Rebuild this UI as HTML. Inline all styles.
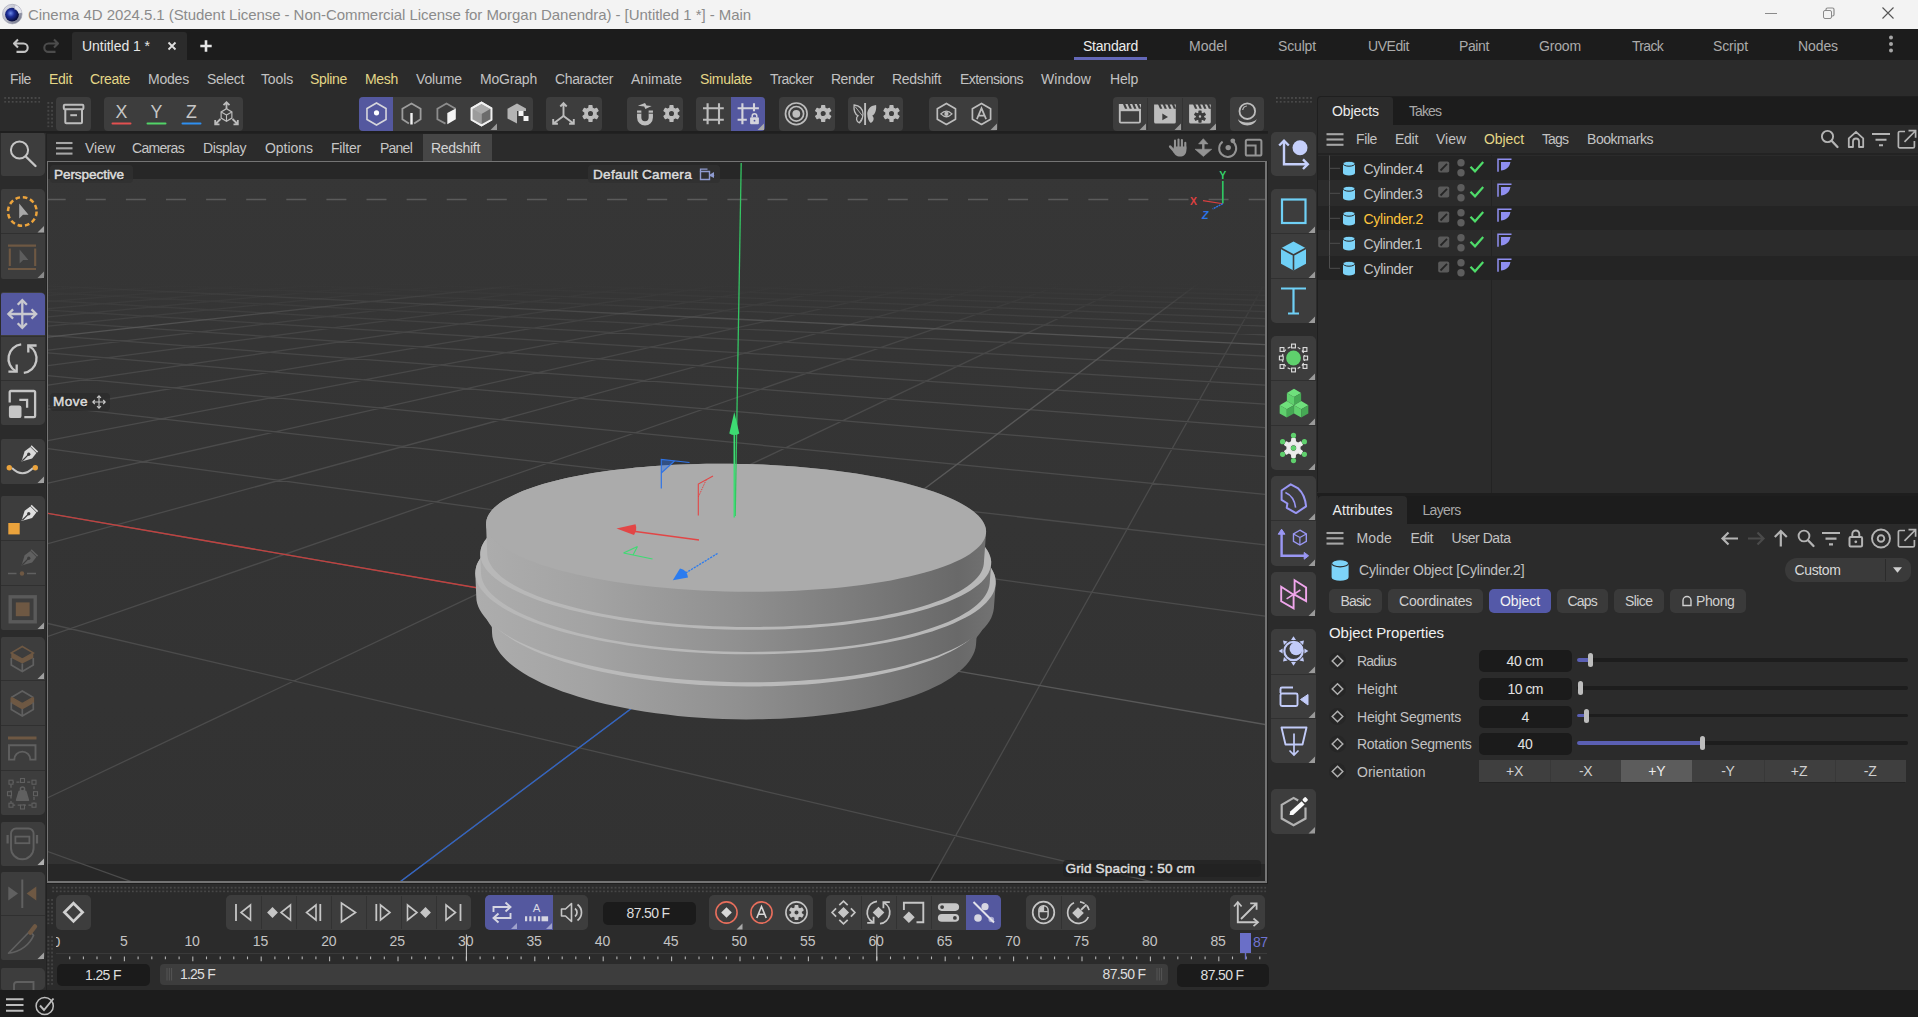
<!DOCTYPE html>
<html><head><meta charset="utf-8"><title>Cinema 4D</title><style>
html,body{margin:0;padding:0;background:#2b2b2b;}
body{width:1918px;height:1017px;position:relative;overflow:hidden;font-family:"Liberation Sans",sans-serif;}
.b{position:absolute;display:block;}
.t{position:absolute;white-space:pre;}
svg{overflow:visible}
</style></head><body>
<div class="b" style="left:0px;top:0px;width:1918px;height:29px;background:#f3f3f3;"></div>
<svg class="b" style="left:0px;top:0px;" width="30" height="30" viewBox="0 0 30 30">
<defs><radialGradient id="lg1" cx="0.4" cy="0.4" r="0.65"><stop offset="0" stop-color="#6c8ae8"/><stop offset="0.4" stop-color="#1d2e98"/><stop offset="1" stop-color="#04072c"/></radialGradient>
<linearGradient id="lg2" x1="0" y1="0" x2="1" y2="1"><stop offset="0" stop-color="#ececf2"/><stop offset="0.5" stop-color="#b4b6c4"/><stop offset="1" stop-color="#5e6278"/></linearGradient></defs>
<circle cx="12.3" cy="14.1" r="9.8" fill="url(#lg2)" stroke="#9a9cac" stroke-width="0.6"/>
<circle cx="12" cy="14.6" r="6.9" fill="url(#lg1)"/>
<path d="M15.5 5.2L14.2 9.2A6 6 0 0 1 18.5 13.5L21.9 12.4A9.8 9.8 0 0 0 15.5 5.2Z" fill="#f0f0f6" opacity="0.85"/>
</svg>
<div class="t" style="left:28px;top:4.5px;height:20px;line-height:20px;font-size:15px;color:#8b8b8b;letter-spacing:-0.054px;">Cinema 4D 2024.5.1 (Student License - Non-Commercial License for Morgan Danendra) - [Untitled 1 *] - Main</div>
<svg class="b" style="left:1760px;top:3.2px;" width="140" height="22" viewBox="0 0 140 22">
<path d="M5 10.5H17" stroke="#8a8a8a" stroke-width="1" fill="none"/>
<rect x="63.5" y="7.5" width="8" height="8" rx="1.5" stroke="#8a8a8a" fill="none"/>
<path d="M66 7.5V6.5a1.5 1.5 0 0 1 1.5-1.5h5a1.5 1.5 0 0 1 1.5 1.5v5a1.5 1.5 0 0 1-1.5 1.5h-1" stroke="#8a8a8a" stroke-width="1.2" fill="none"/>
<path d="M122.5 4.5L133.5 15.5M133.5 4.5L122.5 15.5" stroke="#555" stroke-width="1.1" fill="none"/>
</svg>
<div class="b" style="left:0px;top:29px;width:1918px;height:31px;background:#1c1c1c;"></div>
<div class="b" style="left:72px;top:32px;width:115px;height:28px;background:#2b2b2b;border-radius:3px 3px 0 0;"></div>
<svg class="b" style="left:10px;top:36px;" width="56" height="20" viewBox="0 0 56 20">
<path d="M8 3.5L4 7.5L8 11.5M4.5 7.5H13.5a4.2 4.2 0 0 1 0 8.4H6.5" stroke="#c4c4c4" stroke-width="2.1" fill="none" stroke-linejoin="round"/>
<path d="M44 3.5L48 7.5L44 11.5M47.5 7.5H38.5a4.2 4.2 0 0 0 0 8.4H45.5" stroke="#4c4c4c" stroke-width="2.1" fill="none" stroke-linejoin="round"/>
</svg>
<div class="t" style="left:82px;top:36.0px;height:20px;line-height:20px;font-size:14px;color:#e6e6e6;letter-spacing:-0.040px;">Untitled 1 *</div>
<svg class="b" style="left:166px;top:40px;" width="12" height="12" viewBox="0 0 12 12"><path d="M2.5 2.5L9.5 9.5M9.5 2.5L2.5 9.5" stroke="#e0e0e0" stroke-width="1.8" fill="none"/></svg>
<svg class="b" style="left:199px;top:39px;" width="14" height="14" viewBox="0 0 14 14"><path d="M7 1.3V12.7M1.3 7H12.7" stroke="#e6e6e6" stroke-width="2.6" fill="none"/></svg>
<div class="t" style="left:1083px;top:36.0px;height:20px;line-height:20px;font-size:14px;color:#ededed;letter-spacing:-0.229px;">Standard</div>
<div class="t" style="left:1189px;top:36.0px;height:20px;line-height:20px;font-size:14px;color:#ababab;letter-spacing:-0.028px;">Model</div>
<div class="t" style="left:1278px;top:36.0px;height:20px;line-height:20px;font-size:14px;color:#ababab;letter-spacing:-0.154px;">Sculpt</div>
<div class="t" style="left:1368px;top:36.0px;height:20px;line-height:20px;font-size:14px;color:#ababab;letter-spacing:-0.430px;">UVEdit</div>
<div class="t" style="left:1459px;top:36.0px;height:20px;line-height:20px;font-size:14px;color:#ababab;letter-spacing:-0.384px;">Paint</div>
<div class="t" style="left:1539px;top:36.0px;height:20px;line-height:20px;font-size:14px;color:#ababab;letter-spacing:-0.159px;">Groom</div>
<div class="t" style="left:1632px;top:36.0px;height:20px;line-height:20px;font-size:14px;color:#ababab;letter-spacing:-0.697px;">Track</div>
<div class="t" style="left:1713px;top:36.0px;height:20px;line-height:20px;font-size:14px;color:#ababab;letter-spacing:-0.133px;">Script</div>
<div class="t" style="left:1798px;top:36.0px;height:20px;line-height:20px;font-size:14px;color:#ababab;letter-spacing:-0.094px;">Nodes</div>
<div class="b" style="left:1074px;top:57px;width:73px;height:3px;background:#6468b8;"></div>
<svg class="b" style="left:1886px;top:34.2px;" width="10" height="22" viewBox="0 0 10 22"><circle cx="5" cy="3.5" r="2" fill="#a6a6a6"/><circle cx="5" cy="10" r="2" fill="#a6a6a6"/><circle cx="5" cy="16.5" r="2" fill="#a6a6a6"/></svg>
<div class="b" style="left:0px;top:60px;width:1918px;height:73px;background:#2b2b2b;"></div>
<div class="t" style="left:10px;top:69.0px;height:20px;line-height:20px;font-size:14px;color:#c2c2c2;letter-spacing:-0.391px;">File</div>
<div class="t" style="left:49px;top:69.0px;height:20px;line-height:20px;font-size:14px;color:#e4d787;letter-spacing:-0.281px;">Edit</div>
<div class="t" style="left:90px;top:69.0px;height:20px;line-height:20px;font-size:14px;color:#e4d787;letter-spacing:-0.339px;">Create</div>
<div class="t" style="left:148px;top:69.0px;height:20px;line-height:20px;font-size:14px;color:#c2c2c2;letter-spacing:-0.206px;">Modes</div>
<div class="t" style="left:207px;top:69.0px;height:20px;line-height:20px;font-size:14px;color:#c2c2c2;letter-spacing:-0.320px;">Select</div>
<div class="t" style="left:261px;top:69.0px;height:20px;line-height:20px;font-size:14px;color:#c2c2c2;letter-spacing:-0.138px;">Tools</div>
<div class="t" style="left:310px;top:69.0px;height:20px;line-height:20px;font-size:14px;color:#e4d787;letter-spacing:-0.320px;">Spline</div>
<div class="t" style="left:365px;top:69.0px;height:20px;line-height:20px;font-size:14px;color:#e4d787;letter-spacing:-0.309px;">Mesh</div>
<div class="t" style="left:416px;top:69.0px;height:20px;line-height:20px;font-size:14px;color:#c2c2c2;letter-spacing:-0.117px;">Volume</div>
<div class="t" style="left:480px;top:69.0px;height:20px;line-height:20px;font-size:14px;color:#c2c2c2;letter-spacing:-0.194px;">MoGraph</div>
<div class="t" style="left:555px;top:69.0px;height:20px;line-height:20px;font-size:14px;color:#c2c2c2;letter-spacing:-0.385px;">Character</div>
<div class="t" style="left:631px;top:69.0px;height:20px;line-height:20px;font-size:14px;color:#c2c2c2;letter-spacing:-0.051px;">Animate</div>
<div class="t" style="left:700px;top:69.0px;height:20px;line-height:20px;font-size:14px;color:#e4d787;letter-spacing:-0.309px;">Simulate</div>
<div class="t" style="left:770px;top:69.0px;height:20px;line-height:20px;font-size:14px;color:#c2c2c2;letter-spacing:-0.562px;">Tracker</div>
<div class="t" style="left:831px;top:69.0px;height:20px;line-height:20px;font-size:14px;color:#c2c2c2;letter-spacing:-0.487px;">Render</div>
<div class="t" style="left:892px;top:69.0px;height:20px;line-height:20px;font-size:14px;color:#c2c2c2;letter-spacing:-0.295px;">Redshift</div>
<div class="t" style="left:960px;top:69.0px;height:20px;line-height:20px;font-size:14px;color:#c2c2c2;letter-spacing:-0.548px;">Extensions</div>
<div class="t" style="left:1041px;top:69.0px;height:20px;line-height:20px;font-size:14px;color:#c2c2c2;letter-spacing:0.034px;">Window</div>
<div class="t" style="left:1110px;top:69.0px;height:20px;line-height:20px;font-size:14px;color:#c2c2c2;letter-spacing:-0.199px;">Help</div>
<svg class="b" style="left:0px;top:0px;pointer-events:none" width="1918" height="140" viewBox="0 0 1918 140"><defs><pattern id="dp1" width="3.8" height="4.0" patternUnits="userSpaceOnUse" patternTransform="translate(4.2 97)"><rect width="1.7" height="1.9" fill="#4b4b4b"/></pattern></defs><rect x="4.2" y="97" width="35.90" height="5.70" fill="url(#dp1)"/><defs><pattern id="dp2" width="4.0" height="3.92" patternUnits="userSpaceOnUse" patternTransform="translate(47.3 102)"><rect width="1.7" height="1.9" fill="#4c4c4c"/></pattern></defs><rect x="47.3" y="102" width="5.70" height="25.22" fill="url(#dp2)"/><defs><pattern id="dp3" width="3.8" height="4.0" patternUnits="userSpaceOnUse" patternTransform="translate(1276 97)"><rect width="1.7" height="1.9" fill="#4b4b4b"/></pattern></defs><rect x="1276" y="97" width="35.90" height="5.70" fill="url(#dp3)"/></svg>
<div class="b" style="left:56px;top:97px;width:35px;height:34px;background:#3d3d3d;border-radius:4px;"></div>
<div class="b" style="left:104px;top:97px;width:139px;height:34px;background:#3d3d3d;border-radius:4px;"></div>
<div class="b" style="left:359px;top:97px;width:174px;height:34px;background:#3d3d3d;border-radius:4px;"></div>
<div class="b" style="left:546px;top:97px;width:56px;height:34px;background:#3d3d3d;border-radius:4px;"></div>
<div class="b" style="left:627px;top:97px;width:56px;height:34px;background:#3d3d3d;border-radius:4px;"></div>
<div class="b" style="left:696px;top:97px;width:69px;height:34px;background:#3d3d3d;border-radius:4px;"></div>
<div class="b" style="left:779px;top:97px;width:56px;height:34px;background:#3d3d3d;border-radius:4px;"></div>
<div class="b" style="left:848px;top:97px;width:55px;height:34px;background:#3d3d3d;border-radius:4px;"></div>
<div class="b" style="left:929px;top:97px;width:69px;height:34px;background:#3d3d3d;border-radius:4px;"></div>
<div class="b" style="left:1113px;top:97px;width:103px;height:34px;background:#3d3d3d;border-radius:4px;"></div>
<div class="b" style="left:1230px;top:97px;width:34px;height:34px;background:#3d3d3d;border-radius:4px;"></div>
<div class="b" style="left:359px;top:97px;width:34px;height:34px;background:#54589f;border-radius:4px 0 0 4px;"></div>
<div class="b" style="left:731px;top:97px;width:34px;height:34px;background:#54589f;border-radius:0 4px 4px 0;"></div>
<div class="b" style="left:1147px;top:98px;width:1px;height:32px;background:#333;"></div>
<div class="b" style="left:1182px;top:98px;width:1px;height:32px;background:#333;"></div>
<svg class="b" style="left:0px;top:0px;" width="1918" height="140" viewBox="0 0 1918 140"><rect x="63.8" y="104.8" width="19.6" height="4.4" rx="1" fill="none" stroke="#bdbdbd" stroke-width="2"/><path d="M65.3 109.5V122.3a1 1 0 0 0 1 1H81a1 1 0 0 0 1-1V109.5" fill="none" stroke="#bdbdbd" stroke-width="2"/><path d="M70.3 115.2H77" stroke="#bdbdbd" stroke-width="2"/><text x="121.5" y="118.3" font-size="17.8" text-anchor="middle" fill="#c6c6c6" font-family='"Liberation Sans",sans-serif'>X</text><path d="M112.5 123.4H130.5" stroke="#e25050" stroke-width="2" stroke-linecap="round"/><text x="156.5" y="118.3" font-size="17.8" text-anchor="middle" fill="#c6c6c6" font-family='"Liberation Sans",sans-serif'>Y</text><path d="M147.5 123.4H165.5" stroke="#52d468" stroke-width="2" stroke-linecap="round"/><text x="191.5" y="118.3" font-size="17.8" text-anchor="middle" fill="#c6c6c6" font-family='"Liberation Sans",sans-serif'>Z</text><path d="M182.5 123.4H200.5" stroke="#2f8ff0" stroke-width="2" stroke-linecap="round"/><polygon points="226.50,108.80 231.87,111.90 231.87,118.10 226.50,121.20 221.13,118.10 221.13,111.90" fill="none" stroke="#bdbdbd" stroke-width="1.2"/><path d="M226.5 115V121.2M226.5 115L221.1 111.9M226.5 115L231.9 111.9" stroke="#bdbdbd" stroke-width="1.1" fill="none"/><path d="M226.5 109V102.5M223.5 105.2L226.5 102.2L229.5 105.2" stroke="#bdbdbd" stroke-width="1.8" fill="none"/><path d="M220.5 119L215.5 124M215.2 120V124.3H219.5" stroke="#bdbdbd" stroke-width="1.8" fill="none"/><path d="M232.5 119L237.5 124M237.8 120V124.3H233.5" stroke="#bdbdbd" stroke-width="1.8" fill="none"/><polygon points="376.50,103.00 386.03,108.50 386.03,119.50 376.50,125.00 366.97,119.50 366.97,108.50" fill="none" stroke="#d6d6dc" stroke-width="1.6"/><circle cx="376.5" cy="112.8" r="2.6" fill="#fff"/><path d="M408.9 123.4L402.4 119.2L402.4 108.8L411.5 103.5L420.6 108.8L420.6 119.2L414.1 123.4" fill="none" stroke="#9d9d9d" stroke-width="1.8"/><path d="M411.5 113V124.5" stroke="#f2f2f2" stroke-width="2.4"/><path d="M445.5 123.6L437.4 119.2L437.4 108.8L446.5 103.5L455.6 108.8" fill="none" stroke="#8d8d8d" stroke-width="1.8"/><path d="M447.3 113L455.8 108.4V119.2L447.3 124.3Z" fill="#f4f4f4"/><polygon points="481.50,102.60 491.37,108.30 491.37,119.70 481.50,125.40 471.63,119.70 471.63,108.30" fill="#a9a9a9" stroke="#f0f0f0" stroke-width="1.8"/><path d="M481.5 114L491.4 108.3V119.7L481.5 125.4Z" fill="#6b6b6b"/><path d="M481.5 114L471.6 108.3V119.7L481.5 125.4Z" fill="#9c9c9c"/><polygon points="481.50,102.60 491.37,108.30 491.37,119.70 481.50,125.40 471.63,119.70 471.63,108.30" fill="none" stroke="#f0f0f0" stroke-width="1.8"/><path d="M497 130L497 123.5L490.5 130Z" fill="#9a9a9a"/><path d="M507.5 108.8L517 103.6L526 108.5V111H517V123.5L507.5 118.6Z" fill="#b4b4b4"/><rect x="518.5" y="111" width="5" height="5" fill="#f4f4f4"/><rect x="523.5" y="116" width="5" height="5" fill="#f4f4f4"/><path d="M563.5 116V103.5M560.3 106.5L563.5 103.2L566.7 106.5" stroke="#bdbdbd" stroke-width="1.9" fill="none"/><path d="M563.5 116L553.8 123.3M553.2 119V123.7H557.9" stroke="#bdbdbd" stroke-width="1.9" fill="none"/><path d="M563.5 116L573.2 123.3M573.8 119V123.7H569.1" stroke="#bdbdbd" stroke-width="1.9" fill="none"/><path d="M589.08 105.63 L591.92 105.63 L592.09 108.03 L594.45 109.39 L596.61 108.34 L598.03 110.79 L596.04 112.14 L596.04 114.86 L598.03 116.21 L596.61 118.66 L594.45 117.61 L592.09 118.97 L591.92 121.37 L589.08 121.37 L588.91 118.97 L586.55 117.61 L584.39 118.66 L582.97 116.21 L584.96 114.86 L584.96 112.14 L582.97 110.79 L584.39 108.34 L586.55 109.39 L588.91 108.03Z M587.30 113.50 a3.2 3.2 0 1 0 6.4 0 a3.2 3.2 0 1 0 -6.4 0Z" fill="#bdbdbd" fill-rule="evenodd" stroke="#bdbdbd" stroke-width="1.3" stroke-linejoin="round"/><path d="M639.2 110.5V117.6a5.8 5.8 0 0 0 11.6 0V110.5" stroke="#bdbdbd" stroke-width="4.3" fill="none"/><path d="M636.8 113.2H641.6M648.4 113.2H653.2" stroke="#3d3d3d" stroke-width="1"/><path d="M645 102.9L637.9 105.8L644.2 106.5L645.4 108.9L651.7 106.1L646.5 105.4Z" fill="#bdbdbd"/><path d="M670.08 105.63 L672.92 105.63 L673.09 108.03 L675.45 109.39 L677.61 108.34 L679.03 110.79 L677.04 112.14 L677.04 114.86 L679.03 116.21 L677.61 118.66 L675.45 117.61 L673.09 118.97 L672.92 121.37 L670.08 121.37 L669.91 118.97 L667.55 117.61 L665.39 118.66 L663.97 116.21 L665.96 114.86 L665.96 112.14 L663.97 110.79 L665.39 108.34 L667.55 109.39 L669.91 108.03Z M668.30 113.50 a3.2 3.2 0 1 0 6.4 0 a3.2 3.2 0 1 0 -6.4 0Z" fill="#bdbdbd" fill-rule="evenodd" stroke="#bdbdbd" stroke-width="1.3" stroke-linejoin="round"/><path d="M707.6 103.3V124.2M719 103.3V124.2M703 108.3H723.8M703 119.8H723.8" stroke="#bdbdbd" stroke-width="2.1" fill="none"/><path d="M742.4 103.3V124.2M754 103.3V111.2M737.6 108.3H758.9M737.6 119.8H746.8" stroke="#d4d4dc" stroke-width="2.1" fill="none"/><rect x="750.1" y="117.2" width="8.8" height="7" rx="1" fill="#d4d4dc"/><path d="M752.2 117.2V116a2.3 2.3 0 0 1 4.6 0V117.2" stroke="#d4d4dc" stroke-width="1.5" fill="none"/><circle cx="754.5" cy="120.7" r="0.9" fill="#54589f"/><path d="M764 130L764 123.5L757.5 130Z" fill="#aaa"/><circle cx="796.3" cy="113.8" r="10.8" fill="none" stroke="#bdbdbd" stroke-width="1.7"/><circle cx="796.3" cy="113.8" r="7.3" fill="none" stroke="#bdbdbd" stroke-width="1.7"/><circle cx="796.3" cy="113.8" r="3.9" fill="#bdbdbd"/><path d="M821.78 105.63 L824.62 105.63 L824.79 108.03 L827.15 109.39 L829.31 108.34 L830.73 110.79 L828.74 112.14 L828.74 114.86 L830.73 116.21 L829.31 118.66 L827.15 117.61 L824.79 118.97 L824.62 121.37 L821.78 121.37 L821.61 118.97 L819.25 117.61 L817.09 118.66 L815.67 116.21 L817.66 114.86 L817.66 112.14 L815.67 110.79 L817.09 108.34 L819.25 109.39 L821.61 108.03Z M820.00 113.50 a3.2 3.2 0 1 0 6.4 0 a3.2 3.2 0 1 0 -6.4 0Z" fill="#bdbdbd" fill-rule="evenodd" stroke="#bdbdbd" stroke-width="1.3" stroke-linejoin="round"/><path d="M865.1 103V125" stroke="#bdbdbd" stroke-width="1.9"/><path d="M867.2 113.8C867.5 110 869.5 105.6 876.1 105C876.6 109.5 875.6 113.8 872.2 115.8C874.6 117.6 874.0 121.6 870.8 122.9C868.6 121.6 867.5 118.5 867.2 113.8Z" fill="#bdbdbd"/><path d="M863.0 113.8C862.7 110 860.7 105.6 854.1 105C853.6 109.5 854.6 113.8 858.0 115.8C855.6 117.6 856.2 121.6 859.4000000000001 122.9C861.6 121.6 862.7 118.5 863.0 113.8Z" fill="none" stroke="#bdbdbd" stroke-width="1.3"/><path d="M862.6 116L855 106.5M862.8 117L859.5 122" stroke="#bdbdbd" stroke-width="0.9" fill="none"/><path d="M890.08 105.63 L892.92 105.63 L893.09 108.03 L895.45 109.39 L897.61 108.34 L899.03 110.79 L897.04 112.14 L897.04 114.86 L899.03 116.21 L897.61 118.66 L895.45 117.61 L893.09 118.97 L892.92 121.37 L890.08 121.37 L889.91 118.97 L887.55 117.61 L885.39 118.66 L883.97 116.21 L885.96 114.86 L885.96 112.14 L883.97 110.79 L885.39 108.34 L887.55 109.39 L889.91 108.03Z M888.30 113.50 a3.2 3.2 0 1 0 6.4 0 a3.2 3.2 0 1 0 -6.4 0Z" fill="#bdbdbd" fill-rule="evenodd" stroke="#bdbdbd" stroke-width="1.3" stroke-linejoin="round"/><polygon points="946.40,103.40 955.49,108.65 955.49,119.15 946.40,124.40 937.31,119.15 937.31,108.65" fill="none" stroke="#bdbdbd" stroke-width="1.7" stroke-linejoin="round"/><path d="M940.8 113.9Q946.4 108.30000000000001 952.0 113.9Q946.4 119.5 940.8 113.9Z" fill="none" stroke="#bdbdbd" stroke-width="1.3"/><circle cx="946.4" cy="113.9" r="2.1" fill="#bdbdbd"/><polygon points="981.50,103.40 990.59,108.65 990.59,119.15 981.50,124.40 972.41,119.15 972.41,108.65" fill="none" stroke="#bdbdbd" stroke-width="1.7" stroke-linejoin="round"/><path d="M976.9 119.2L981.5 108.30000000000001L986.1 119.2M978.5 115.7H984.5" fill="none" stroke="#bdbdbd" stroke-width="1.7"/><path d="M997 130L997 123.5L990.5 130Z" fill="#9a9a9a"/><path d="M1119.8 105.0H1140.0V121.60000000000001a1 1 0 0 1-1 1H1120.8a1 1 0 0 1-1-1Z" fill="none" stroke="#bdbdbd" stroke-width="1.9"/><path d="M1119.1 104.4H1140.8V111.2H1119.1Z" fill="#bdbdbd"/><path d="M1123.0 104.10000000000001h2.3l2 4.6h-2.3Z" fill="#3d3d3d"/><path d="M1127.6 104.10000000000001h2.3l2 4.6h-2.3Z" fill="#3d3d3d"/><path d="M1132.2 104.10000000000001h2.3l2 4.6h-2.3Z" fill="#3d3d3d"/><path d="M1136.8 104.10000000000001h2.3l2 4.6h-2.3Z" fill="#3d3d3d"/><path d="M1154.1 104.4H1175.8V122.0a1.6 1.6 0 0 1-1.6 1.6H1155.7a1.6 1.6 0 0 1-1.6-1.6Z" fill="#bdbdbd"/><path d="M1158.0 104.10000000000001h2.3l2 4.6h-2.3Z" fill="#3d3d3d"/><path d="M1162.6 104.10000000000001h2.3l2 4.6h-2.3Z" fill="#3d3d3d"/><path d="M1167.2 104.10000000000001h2.3l2 4.6h-2.3Z" fill="#3d3d3d"/><path d="M1171.8 104.10000000000001h2.3l2 4.6h-2.3Z" fill="#3d3d3d"/><path d="M1162.3 113.60000000000001V120.2L1168.0 116.9Z" fill="#3d3d3d"/><path d="M1189.1 104.4H1210.8V122.0a1.6 1.6 0 0 1-1.6 1.6H1190.7a1.6 1.6 0 0 1-1.6-1.6Z" fill="#bdbdbd"/><path d="M1193.0 104.10000000000001h2.3l2 4.6h-2.3Z" fill="#3d3d3d"/><path d="M1197.6 104.10000000000001h2.3l2 4.6h-2.3Z" fill="#3d3d3d"/><path d="M1202.2 104.10000000000001h2.3l2 4.6h-2.3Z" fill="#3d3d3d"/><path d="M1206.8 104.10000000000001h2.3l2 4.6h-2.3Z" fill="#3d3d3d"/><path d="M1199.01 111.09 L1200.99 111.09 L1201.00 113.14 L1202.49 114.00 L1204.28 112.99 L1205.27 114.70 L1203.50 115.74 L1203.50 117.46 L1205.27 118.50 L1204.28 120.21 L1202.49 119.20 L1201.00 120.06 L1200.99 122.11 L1199.01 122.11 L1199.00 120.06 L1197.51 119.20 L1195.72 120.21 L1194.73 118.50 L1196.50 117.46 L1196.50 115.74 L1194.73 114.70 L1195.72 112.99 L1197.51 114.00 L1199.00 113.14Z M1198.10 116.60 a1.9 1.9 0 1 0 3.8 0 a1.9 1.9 0 1 0 -3.8 0Z" fill="#3d3d3d" fill-rule="evenodd" stroke="#3d3d3d" stroke-width="1.3" stroke-linejoin="round"/><path d="M1146 130L1146 123.5L1139.5 130Z" fill="#9a9a9a"/><path d="M1181 130L1181 123.5L1174.5 130Z" fill="#9a9a9a"/><path d="M1216 130L1216 123.5L1209.5 130Z" fill="#9a9a9a"/><circle cx="1247.3" cy="111.2" r="7.8" fill="none" stroke="#bdbdbd" stroke-width="1.8"/><path d="M1242.7 110.0a4.8 4.8 0 0 1 4.2-4" fill="none" stroke="#bdbdbd" stroke-width="1.2"/><path d="M1237.8 118.7C1239.8 127.6 1254.8 127.6 1256.8 118.7C1253.8 123.8 1240.8 123.8 1237.8 118.7Z" fill="#bdbdbd"/></svg>
<div class="b" style="left:1px;top:131px;width:44px;height:45px;background:#3d3d3d;border-radius:2px 5px 5px 2px;"></div>
<div class="b" style="left:1px;top:189px;width:44px;height:90px;background:#3d3d3d;border-radius:2px 5px 5px 2px;"></div>
<div class="b" style="left:1px;top:233px;width:44px;height:1px;background:#303030;"></div>
<div class="b" style="left:1px;top:292px;width:44px;height:133px;background:#3d3d3d;border-radius:2px 5px 5px 2px;"></div>
<div class="b" style="left:1px;top:336px;width:44px;height:1px;background:#303030;"></div>
<div class="b" style="left:1px;top:380px;width:44px;height:1px;background:#303030;"></div>
<div class="b" style="left:1px;top:292.5px;width:44px;height:42.5px;background:#54589f;border-radius:2px 4px 0 0;"></div>
<div class="b" style="left:1px;top:439px;width:44px;height:45px;background:#3d3d3d;border-radius:2px 5px 5px 2px;"></div>
<div class="b" style="left:1px;top:496px;width:44px;height:134px;background:#3d3d3d;border-radius:2px 5px 5px 2px;"></div>
<div class="b" style="left:1px;top:540px;width:44px;height:1px;background:#303030;"></div>
<div class="b" style="left:1px;top:585px;width:44px;height:1px;background:#303030;"></div>
<div class="b" style="left:1px;top:637px;width:44px;height:178px;background:#3d3d3d;border-radius:2px 5px 5px 2px;"></div>
<div class="b" style="left:1px;top:680px;width:44px;height:1px;background:#303030;"></div>
<div class="b" style="left:1px;top:725px;width:44px;height:1px;background:#303030;"></div>
<div class="b" style="left:1px;top:770px;width:44px;height:1px;background:#303030;"></div>
<div class="b" style="left:1px;top:822px;width:44px;height:44px;background:#3d3d3d;border-radius:2px 5px 5px 2px;"></div>
<div class="b" style="left:1px;top:872px;width:44px;height:88px;background:#3d3d3d;border-radius:2px 5px 5px 2px;"></div>
<div class="b" style="left:1px;top:915px;width:44px;height:1px;background:#303030;"></div>
<div class="b" style="left:1px;top:968px;width:44px;height:22px;background:#3d3d3d;border-radius:2px 5px 5px 2px;"></div>
<svg class="b" style="left:0px;top:0px;" width="60" height="1017" viewBox="0 0 60 1017"><circle cx="19.5" cy="150" r="8.6" fill="none" stroke="#c6c6c6" stroke-width="2"/><path d="M25.8 156.5L35.5 166" stroke="#c6c6c6" stroke-width="2.4" stroke-linecap="round"/><circle cx="22.3" cy="211.5" r="14.3" fill="none" stroke="#eba33c" stroke-width="2.5" stroke-dasharray="4.6 2.9"/><path d="M19.2 203.5V218.6L23 214.8H28.5Z" fill="#a8a8a8"/><path d="M44 232.5L44 226.0L37.5 232.5Z" fill="#a0a0a0"/><path d="M8 245.6H36M8 269H36M9.8 248.5V266M35.2 248.5V266" stroke="#6e5843" stroke-width="2.1" fill="none"/><path d="M19.6 249.5V263.6L23.2 260H28.4Z" fill="#5d5d5d"/><path d="M44 278L44 271.5L37.5 278Z" fill="#8a8a8a"/><path d="M22.3 300.5V327.5M8.8 314H35.8" stroke="#c9c9cf" stroke-width="2.3" fill="none"/><path d="M17.700000000000003 304.8L22.3 300.1L26.9 304.8M17.700000000000003 323.2L22.3 327.9L26.9 323.2M13.100000000000001 309.4L8.4 314L13.100000000000001 318.6M31.5 309.4L36.2 314L31.5 318.6" stroke="#c9c9cf" stroke-width="2.3" fill="none"/><path d="M21.2 344.4A14.4 14.4 0 0 0 15.9 371.3" stroke="#c6c6c6" stroke-width="2.3" fill="none"/><path d="M8.4 371.7H16.7V364.6" stroke="#c6c6c6" stroke-width="2.3" fill="none"/><path d="M23.8 372.8A14.4 14.4 0 0 0 29.1 345.9" stroke="#c6c6c6" stroke-width="2.3" fill="none"/><path d="M36.6 345.5H28.3V352.6" stroke="#c6c6c6" stroke-width="2.3" fill="none"/><path d="M9.700000000000001 402.5V392.2a1.2 1.2 0 0 1 1.2-1.2H33.9a1.2 1.2 0 0 1 1.2 1.2V416.0a1.2 1.2 0 0 1-1.2 1.2H24.3" stroke="#c6c6c6" stroke-width="2.3" fill="none"/><rect x="8.9" y="405.5" width="12.6" height="12.6" rx="2.2" fill="#c6c6c6"/><path d="M19.3 399.9H27.1V407.7" stroke="#c6c6c6" stroke-width="2.3" fill="none"/><path d="M12 468Q22.5 478.5 33 468" stroke="#c6c6c6" stroke-width="1.9" fill="none"/><circle cx="9.3" cy="467.8" r="2.7" fill="#eba33c"/><circle cx="35.3" cy="467.8" r="2.7" fill="#eba33c"/><g transform="translate(21.5 461.5) scale(0.98)"><path d="M0 0L3.2 -10.5L9 -14.8L15.2 -8.8L10.8 -3Z" fill="#d9d9d9"/><path d="M0.8 -0.8L7 -7" stroke="#3d3d3d" stroke-width="1.3"/><circle cx="7.4" cy="-7.4" r="1.7" fill="#3d3d3d"/><path d="M9.8 -16L16.4 -9.6" stroke="#d9d9d9" stroke-width="1.6"/></g><path d="M44 483L44 476.5L37.5 483Z" fill="#a0a0a0"/><rect x="8.3" y="523" width="11.4" height="11.4" fill="#eba33c"/><g transform="translate(21.5 521) scale(0.98)"><path d="M0 0L3.2 -10.5L9 -14.8L15.2 -8.8L10.8 -3Z" fill="#e0e0e0"/><path d="M0.8 -0.8L7 -7" stroke="#3d3d3d" stroke-width="1.3"/><circle cx="7.4" cy="-7.4" r="1.7" fill="#3d3d3d"/><path d="M9.8 -16L16.4 -9.6" stroke="#e0e0e0" stroke-width="1.6"/></g><path d="M8 573.5H16.5M27 573.5H36" stroke="#606060" stroke-width="1.6"/><circle cx="22" cy="573.5" r="2.2" fill="#6e5843"/><g transform="translate(21.5 565.5) scale(0.98)"><path d="M0 0L3.2 -10.5L9 -14.8L15.2 -8.8L10.8 -3Z" fill="#606060"/><path d="M0.8 -0.8L7 -7" stroke="#3d3d3d" stroke-width="1.3"/><circle cx="7.4" cy="-7.4" r="1.7" fill="#3d3d3d"/><path d="M9.8 -16L16.4 -9.6" stroke="#606060" stroke-width="1.6"/></g><rect x="10.2" y="596.8" width="25" height="25" fill="none" stroke="#5a5a5a" stroke-width="3.4"/><rect x="15.8" y="602.4" width="13.8" height="13.8" fill="#6e5843"/><path d="M44 629L44 622.5L37.5 629Z" fill="#a0a0a0"/><path d="M11.3 652.9L22.3 646.5L33.3 652.9L22.3 659.3Z" fill="none" stroke="#6e5843" stroke-width="1.6"/><path d="M11.3 652.9V658.0L22.3 663.5L33.3 658.0V652.9L22.3 659.3Z" fill="#6e5843"/><path d="M11.3 658.0V665.0L22.3 671.5L33.3 665.0V658.0M22.3 663.5V671.5" fill="none" stroke="#606060" stroke-width="1.7"/><path d="M44 679L44 672.5L37.5 679Z" fill="#a0a0a0"/><path d="M11.3 697.4L22.3 691L33.3 697.4" fill="none" stroke="#606060" stroke-width="1.7"/><path d="M11.3 697.4L22.3 703.6L33.3 697.4" fill="none" stroke="#6e5843" stroke-width="1.6"/><path d="M10.5 697.2V702.7L22.3 709.4L34.1 702.7V697.2L22.3 703.8Z" fill="#6e5843"/><path d="M11.3 702.5V709.5L22.3 716L33.3 709.5V702.5M22.3 709V716" fill="none" stroke="#606060" stroke-width="1.7"/><path d="M8 738H36.5" stroke="#6e5843" stroke-width="3"/><path d="M9 745.2H35.5V759.6H30.3a8 8 0 0 0-16 0H9Z" fill="none" stroke="#606060" stroke-width="1.9"/><rect x="11" y="782.2" width="23" height="23" fill="none" stroke="#606060" stroke-width="1.3" stroke-dasharray="3 2.4"/><rect x="9" y="780.2" width="4" height="4" fill="#3d3d3d" stroke="#606060" stroke-width="1.1"/><rect x="20.5" y="778.5" width="4" height="4" fill="#3d3d3d" stroke="#606060" stroke-width="1.1"/><rect x="32" y="780.2" width="4" height="4" fill="#3d3d3d" stroke="#606060" stroke-width="1.1"/><rect x="9" y="803.2" width="4" height="4" fill="#3d3d3d" stroke="#606060" stroke-width="1.1"/><rect x="20.5" y="805" width="4" height="4" fill="#3d3d3d" stroke="#606060" stroke-width="1.1"/><rect x="32" y="803.2" width="4" height="4" fill="#3d3d3d" stroke="#606060" stroke-width="1.1"/><rect x="7.5" y="791.7" width="4" height="4" fill="#3d3d3d" stroke="#606060" stroke-width="1.1"/><rect x="33.5" y="791.7" width="4" height="4" fill="#3d3d3d" stroke="#606060" stroke-width="1.1"/><path d="M19.3 791.3H25.7L28.4 800.3H16.6Z" fill="#606060" stroke="#606060" stroke-width="1.6" stroke-linejoin="round"/><circle cx="22.5" cy="789" r="2.1" fill="none" stroke="#606060" stroke-width="1.5"/><path d="M11 833.5a5 5 0 0 1 5-5h12.6a5 5 0 0 1 5 5V848a11.3 11.3 0 0 1-22.6 0Z" fill="none" stroke="#606060" stroke-width="1.9"/><rect x="15.4" y="836.6" width="14" height="6.6" fill="none" stroke="#606060" stroke-width="1.8"/><path d="M7.6 835V843.5M37 835V843.5" stroke="#606060" stroke-width="2.2"/><path d="M44 865L44 858.5L37.5 865Z" fill="#b0b0b0"/><path d="M22.3 879.5V908" stroke="#606060" stroke-width="2"/><path d="M8.3 886.5V900.5L18 893.5Z" fill="#606060"/><path d="M36.3 886.5V900.5L26.6 893.5Z" fill="#6e5843"/><path d="M8.5 953.2L29.8 931.2L33.6 935.4C30 944 20.5 952.3 8.5 953.2Z" fill="none" stroke="#606060" stroke-width="1.6" stroke-linejoin="round"/><path d="M30.2 932.6L35 926.4" stroke="#6e5843" stroke-width="4.4" stroke-linecap="round"/><path d="M44 959L44 952.5L37.5 959Z" fill="#a0a0a0"/><path d="M14 990V985a3 3 0 0 1 3-3H33.5V990" fill="none" stroke="#606060" stroke-width="1.9"/></svg>
<div class="b" style="left:46px;top:132px;width:1223px;height:858px;background:#222222;"></div>
<div class="b" style="left:47px;top:134px;width:1221px;height:856px;background:#2b2b2b;"></div>
<div class="b" style="left:0px;top:131px;width:1268px;height:2px;background:#1f1f1f;"></div>
<div class="b" style="left:423px;top:134px;width:69px;height:27px;background:#464646;"></div>
<svg class="b" style="left:0px;top:0px;" width="100" height="170" viewBox="0 0 100 170"><path d="M56 143H72.5" stroke="#a6a6a6" stroke-width="2.1"/><path d="M56 148.3H72.5" stroke="#a6a6a6" stroke-width="2.1"/><path d="M56 153.6H72.5" stroke="#a6a6a6" stroke-width="2.1"/></svg>
<div class="t" style="left:85px;top:138.0px;height:20px;line-height:20px;font-size:14px;color:#c6c6c6;letter-spacing:-0.023px;">View</div>
<div class="t" style="left:132px;top:138.0px;height:20px;line-height:20px;font-size:14px;color:#c6c6c6;letter-spacing:-0.685px;">Cameras</div>
<div class="t" style="left:203px;top:138.0px;height:20px;line-height:20px;font-size:14px;color:#c6c6c6;letter-spacing:-0.415px;">Display</div>
<div class="t" style="left:265px;top:138.0px;height:20px;line-height:20px;font-size:14px;color:#c6c6c6;letter-spacing:-0.036px;">Options</div>
<div class="t" style="left:331px;top:138.0px;height:20px;line-height:20px;font-size:14px;color:#c6c6c6;letter-spacing:-0.188px;">Filter</div>
<div class="t" style="left:380px;top:138.0px;height:20px;line-height:20px;font-size:14px;color:#c6c6c6;letter-spacing:-0.762px;">Panel</div>
<div class="t" style="left:431px;top:138.0px;height:20px;line-height:20px;font-size:14px;color:#d4d4d4;letter-spacing:-0.295px;">Redshift</div>
<div class="b" style="left:47px;top:161px;width:1221px;height:723px;background:#1f1f1f;"></div>
<div class="b" style="left:47px;top:161px;width:1220px;height:722px;background:#747474;"></div>
<div class="b" style="left:48px;top:162px;width:1217px;height:719px;background:linear-gradient(#363636,#323232);"></div>
<div class="b" style="left:48px;top:162px;width:1217px;height:17px;background:#272727;"></div>
<div class="b" style="left:48px;top:863.5px;width:1217px;height:17.5px;background:#272727;"></div>
<svg class="b" style="left:0px;top:0px;" width="1918" height="1017" viewBox="0 0 1918 1017"><defs><linearGradient id="gf" gradientUnits="userSpaceOnUse" x1="0" y1="284" x2="0" y2="420"><stop offset="0" stop-color="#4b4b4b" stop-opacity="0"/><stop offset="0.35" stop-color="#4b4b4b" stop-opacity="0.75"/><stop offset="1" stop-color="#4b4b4b" stop-opacity="1"/></linearGradient><clipPath id="vclip"><rect x="48" y="179" width="1219" height="685"/></clipPath><clipPath id="vclip2"><rect x="48" y="162" width="1217" height="719"/></clipPath></defs><defs><linearGradient id="gf2" gradientUnits="userSpaceOnUse" x1="0" y1="284" x2="0" y2="420"><stop offset="0" stop-color="#5a5a5a" stop-opacity="0"/><stop offset="0.3" stop-color="#5a5a5a" stop-opacity="0.8"/><stop offset="1" stop-color="#585858" stop-opacity="1"/></linearGradient></defs><g clip-path="url(#vclip2)"><path d="M4001.0 258.4L525803.4 12021.0M3914.5 257.5L516646.4 12021.0M3830.5 256.6L507489.4 12021.0M3749.0 255.8L498332.4 12021.0M3669.8 254.9L489175.4 12021.0M3592.8 254.1L480018.4 12021.0M3518.0 253.3L470861.4 12021.0M3445.3 252.6L461704.4 12021.0M3374.5 251.8L452547.4 12021.0M3238.5 250.4L434233.4 12021.0M5441.9 289.3L148.4 222.2M3173.2 249.7L425076.4 12021.0M5633.0 293.5L134.5 222.5M3109.6 249.1L415919.4 12021.0M5842.7 298.2L120.3 222.8M3047.6 248.4L406762.4 12021.0M6073.8 303.3L105.8 223.1M2987.1 247.8L397605.4 12021.0M6329.7 309.0L90.8 223.4M2928.2 247.2L388448.4 12021.0M6614.7 315.3L75.5 223.7M2870.6 246.6L379291.4 12021.0M6934.0 322.4L59.9 224.0M2814.5 246.0L370134.4 12021.0M7294.3 330.3L43.8 224.4M2759.7 245.4L360977.4 12021.0M7703.9 339.4L27.3 224.7M2654.0 244.3L342663.4 12021.0M8718.0 361.9L-7.0 225.4M2603.0 243.7L333506.4 12021.0M9356.2 376.0L-24.9 225.8M2553.1 243.2L324349.4 12021.0M10114.7 392.8L-43.2 226.2M2504.3 242.7L315192.4 12021.0M11031.2 413.1L-62.1 226.6M2456.7 242.2L306035.4 12021.0M12160.7 438.2L-81.4 227.0M2410.0 241.7L296878.4 12021.0M13587.3 469.8L-101.4 227.4M2364.5 241.2L287721.4 12021.0M15445.9 510.9L-121.9 227.8M2319.8 240.8L278564.4 12021.0M17967.8 566.8L-143.0 228.3M2276.2 240.3L269407.4 12021.0M21585.2 647.0L-164.8 228.7M2191.6 239.4L251093.4 12021.0M37154.1 991.9L-210.3 229.7M2150.6 239.0L241936.4 12021.0M59495.6 1486.9L-234.1 230.2M2110.5 238.6L232779.4 12021.0M155784.4 3620.2L-258.7 230.7M2071.1 238.2L223622.4 12021.0M524897.3 12021.0L-284.1 231.2M2032.6 237.8L214465.4 12021.0M507263.0 12021.0L-310.3 231.8M1994.8 237.4L205308.4 12021.0M489628.6 12021.0L-337.4 232.3M1957.8 237.0L196151.4 12021.0M471994.3 12021.0L-365.4 232.9M1921.5 236.6L186994.4 12021.0M454360.0 12021.0L-394.3 233.5M1885.9 236.2L177837.4 12021.0M436725.6 12021.0L-424.3 234.1M1816.7 235.5L159523.4 12021.0M401457.0 12021.0L-487.6 235.5M1783.0 235.1L150366.4 12021.0M383822.6 12021.0L-521.0 236.2M1750.0 234.8L141209.4 12021.0M366188.3 12021.0L-555.6 236.9M1717.6 234.4L132052.4 12021.0M348554.0 12021.0L-591.6 237.6M1685.8 234.1L122895.4 12021.0M330919.6 12021.0L-629.0 238.4M1654.6 233.8L113738.4 12021.0M313285.3 12021.0L-667.9 239.2M1623.9 233.5L104581.4 12021.0M295651.0 12021.0L-708.4 240.1M1593.8 233.1L95424.4 12021.0M278016.6 12021.0L-750.6 241.0M1564.2 232.8L86267.4 12021.0M260382.3 12021.0L-794.5 241.9M1506.5 232.2L67953.5 12021.0M225113.7 12021.0L-888.4 243.9M1478.5 231.9L58796.5 12021.0M207479.3 12021.0L-938.5 244.9M1450.8 231.6L49639.5 12021.0M189845.0 12021.0L-990.9 246.0M1423.7 231.4L40482.5 12021.0M172210.7 12021.0L-1045.9 247.2M1397.0 231.1L31325.5 12021.0M154576.3 12021.0L-1103.5 248.4M1370.8 230.8L22168.5 12021.0M136942.0 12021.0L-1164.0 249.6M1344.9 230.5L13011.5 12021.0M119307.7 12021.0L-1227.7 251.0M1319.5 230.3L3854.5 12021.0M101673.3 12021.0L-1294.7 252.4M1294.5 230.0L-5302.5 12021.0M84039.0 12021.0L-1365.3 253.8M1245.8 229.5L-23616.5 12021.0M48770.3 12021.0L-1518.7 257.0M1222.0 229.2L-32773.5 12021.0M31136.0 12021.0L-1602.2 258.8M1198.5 229.0L-41930.5 12021.0M13501.7 12021.0L-1690.7 260.6M1175.4 228.8L-51087.5 12021.0M-4132.7 12021.0L-1784.8 262.6M1152.7 228.5L-60244.5 12021.0M-21767.0 12021.0L-1885.0 264.7M1130.3 228.3L-69401.5 12021.0M-39401.3 12021.0L-1991.9 266.9M1108.3 228.1L-78558.5 12021.0M-57035.7 12021.0L-2106.1 269.3M1086.6 227.8L-87715.5 12021.0M-74670.0 12021.0L-2228.6 271.9M1065.2 227.6L-96872.5 12021.0M-92304.3 12021.0L-2360.2 274.6M1023.4 227.2L-115186.5 12021.0M-127573.0 12021.0L-2655.0 280.8M1003.0 226.9L-124343.5 12021.0M-145207.3 12021.0L-2820.9 284.3M982.8 226.7L-133500.5 12021.0M-162841.6 12021.0L-3001.2 288.1M963.0 226.5L-142657.5 12021.0M-180476.0 12021.0L-3198.0 292.2M943.4 226.3L-151814.5 12021.0M-198110.3 12021.0L-3413.7 296.7M924.1 226.1L-160971.5 12021.0M-215744.6 12021.0L-3651.0 301.6M905.1 225.9L-170128.5 12021.0M-233379.0 12021.0L-3913.4 307.1M886.3 225.7L-179285.5 12021.0M-251013.3 12021.0L-4205.1 313.2M867.8 225.5L-188442.5 12021.0M-268647.6 12021.0L-4531.2 320.1M831.6 225.1L-206756.5 12021.0M-303916.3 12021.0L-5314.7 336.5M813.8 225.0L-215913.5 12021.0M-321550.6 12021.0L-5790.9 346.4M796.3 224.8L-225070.5 12021.0M-339185.0 12021.0L-6340.9 357.9M779.1 224.6L-234227.5 12021.0M-356819.3 12021.0L-6983.1 371.4M762.0 224.4L-243384.5 12021.0M-374453.6 12021.0L-7743.0 387.2M745.2 224.2L-252541.5 12021.0M-392088.0 12021.0L-8656.2 406.4M728.6 224.1L-261698.5 12021.0M-409722.3 12021.0L-9774.2 429.7M712.2 223.9L-270855.5 12021.0M-427356.6 12021.0L-11174.6 459.0M696.1 223.7L-280012.5 12021.0M-444991.0 12021.0L-12979.9 496.8M664.4 223.4L-298326.5 12021.0M-480259.6 12021.0L-18793.6 618.4M648.8 223.2L-307483.5 12021.0M-497894.0 12021.0L-23927.0 725.8M633.5 223.1L-316640.5 12021.0M-515528.3 12021.0L-32580.2 906.8M618.3 222.9L-325797.5 12021.0M-533162.6 12021.0L-50262.2 1276.7M603.4 222.8L-334954.5 12021.0M-550796.9 12021.0L-106518.0 2453.5M588.6 222.6L-344111.5 12021.0M574.0 222.4L-353268.5 12021.0M559.6 222.3L-362425.5 12021.0M545.3 222.1L-371582.5 12021.0M517.4 221.8L-389896.5 12021.0M503.6 221.7L-399053.5 12021.0M490.1 221.6L-408210.5 12021.0M476.7 221.4L-417367.5 12021.0M463.4 221.3L-426524.5 12021.0M450.3 221.1L-435681.5 12021.0M437.4 221.0L-444838.5 12021.0M424.6 220.9L-453995.5 12021.0M411.9 220.7L-463152.5 12021.0M387.1 220.5L-481466.5 12021.0M374.9 220.4L-490623.5 12021.0M362.8 220.2L-499780.5 12021.0M350.8 220.1L-508937.5 12021.0M339.0 220.0L-518094.5 12021.0M327.4 219.9L-527251.5 12021.0M315.8 219.7L-536408.5 12021.0M304.4 219.6L-545565.5 12021.0M293.1 219.5L-554722.5 12021.0" stroke="url(#gf)" stroke-width="1.25" fill="none"/><path d="M4090.2 259.4L534960.4 12021.0M3305.6 251.1L443390.4 12021.0M5267.0 285.4L161.9 221.9M2706.2 244.8L351820.4 12021.0M8173.7 349.8L10.4 225.1M2233.4 239.9L260250.4 12021.0M27209.9 771.6L-187.2 229.2M1850.9 235.8L168680.4 12021.0M419091.3 12021.0L-455.4 234.8M1535.1 232.5L77110.5 12021.0M242748.0 12021.0L-840.4 242.9M1270.0 229.7L-14459.5 12021.0M66404.7 12021.0L-1439.9 255.4M1044.2 227.4L-106029.5 12021.0M-109938.7 12021.0L-2501.9 277.6M849.6 225.3L-197599.5 12021.0M-286282.0 12021.0L-4898.4 327.7M680.1 223.6L-289169.5 12021.0M-462625.3 12021.0L-15395.5 547.3M531.3 222.0L-380739.5 12021.0M399.4 220.6L-472309.5 12021.0M281.9 219.4L-563879.5 12021.0" stroke="url(#gf2)" stroke-width="1.3" fill="none"/><path d="M733.1 632.2L-1439.9 255.4" stroke="#c2413f" stroke-width="1.3"/><path d="M733.1 632.2L-14459.5 12021.0" stroke="#2f64c8" stroke-width="1.3"/></g><path d="M45.7 199.5H1267" stroke="#5b5b5b" stroke-width="1.6" stroke-dasharray="20 20.1" clip-path="url(#vclip2)"/><defs><linearGradient id="wall" gradientUnits="userSpaceOnUse" x1="475" y1="0" x2="1000" y2="0"><stop offset="0" stop-color="#adadad"/><stop offset="0.22" stop-color="#a3a3a3"/><stop offset="0.5" stop-color="#909090"/><stop offset="0.75" stop-color="#797979"/><stop offset="0.92" stop-color="#696969"/><stop offset="1" stop-color="#747474"/></linearGradient></defs><polygon points="490.9,603.4 490.9,600.3 491.3,597.3 492.1,594.3 493.2,591.4 494.7,588.5 496.5,585.6 498.6,582.8 501.1,580.1 503.8,577.4 506.9,574.8 510.2,572.2 513.8,569.7 517.7,567.2 521.9,564.9 526.3,562.6 530.9,560.3 535.8,558.2 540.8,556.1 546.1,554.0 551.6,552.1 557.3,550.2 563.1,548.5 569.1,546.7 575.3,545.1 581.7,543.5 588.2,542.1 594.8,540.7 601.6,539.4 608.4,538.1 615.4,537.0 622.5,535.9 629.8,534.9 637.0,534.0 644.4,533.1 651.9,532.4 659.4,531.7 667.0,531.1 674.7,530.6 682.4,530.1 690.2,529.8 698.0,529.5 705.8,529.3 713.7,529.2 721.6,529.2 729.5,529.3 737.4,529.4 745.3,529.6 753.2,529.9 761.1,530.3 768.9,530.8 776.8,531.3 784.6,531.9 792.4,532.6 800.1,533.4 807.8,534.3 815.4,535.2 823.0,536.3 830.5,537.4 837.9,538.6 845.2,539.9 852.4,541.2 859.5,542.6 866.5,544.1 873.4,545.7 880.2,547.4 886.8,549.1 893.2,551.0 899.6,552.9 905.7,554.8 911.7,556.9 917.5,559.0 923.1,561.2 928.5,563.5 933.6,565.8 938.6,568.2 943.3,570.7 947.8,573.2 952.0,575.8 955.9,578.5 959.6,581.2 963.0,583.9 966.0,586.8 968.8,589.6 971.2,592.5 973.3,595.5 975.1,598.5 976.5,601.5 977.5,604.6 978.1,607.7 978.4,610.8 978.2,613.9 976.0,644.7 975.5,648.1 974.5,651.4 973.1,654.8 971.3,658.1 969.0,661.5 966.4,664.8 963.2,668.1 959.6,671.3 955.6,674.5 951.2,677.7 946.3,680.8 940.9,683.9 935.1,686.8 928.9,689.7 922.3,692.5 915.2,695.2 907.7,697.8 899.8,700.3 891.5,702.6 882.9,704.9 873.9,707.0 864.6,708.9 855.0,710.7 845.0,712.3 834.8,713.8 824.3,715.1 813.6,716.3 802.7,717.3 791.7,718.1 780.5,718.7 769.1,719.1 757.7,719.3 746.2,719.4 734.8,719.3 723.3,719.0 711.8,718.5 700.4,717.8 689.1,716.9 677.9,715.9 666.9,714.6 656.0,713.3 645.4,711.7 635.0,710.0 624.8,708.1 614.9,706.1 605.3,704.0 596.0,701.7 587.0,699.3 578.4,696.8 570.2,694.1 562.3,691.4 554.9,688.6 547.8,685.7 541.1,682.7 534.9,679.6 529.0,676.5 523.6,673.3 518.7,670.1 514.1,666.8 510.0,663.5 506.4,660.2 503.1,656.8 500.3,653.5 497.9,650.1 495.9,646.8 494.4,643.4 493.2,640.1 492.4,636.8 492.1,633.5" fill="url(#wall)"/><polygon points="530.9,560.3 526.3,562.6 521.9,564.9 517.7,567.2 513.8,569.7 510.2,572.2 506.9,574.8 503.8,577.4 501.1,580.1 498.6,582.8 496.5,585.6 494.7,588.5 493.2,591.4 492.1,594.3 491.3,597.3 490.9,600.3 490.9,603.4 491.3,606.5 492.1,609.6 493.2,612.7 494.8,615.8 496.8,619.0 499.2,622.1 502.0,625.3 505.3,628.4 509.0,631.5 513.1,634.6 517.7,637.7 522.7,640.7 528.1,643.7 534.0,646.7 540.2,649.5 547.0,652.4 554.1,655.1 561.6,657.8 569.5,660.3 577.8,662.8 586.5,665.2 595.5,667.4 604.9,669.6 614.6,671.6 624.5,673.5 634.8,675.2 645.3,676.8 656.0,678.3 667.0,679.6 678.1,680.7 689.4,681.7 700.8,682.5 712.2,683.2 723.8,683.6 735.4,683.9 747.0,684.0 758.5,684.0 770.0,683.8 781.4,683.4 792.7,682.8 803.9,682.0 814.9,681.1 825.7,680.0 836.2,678.8 846.5,677.4 856.5,675.9 866.2,674.2 875.6,672.3 884.7,670.4 893.4,668.3 901.7,666.1 909.6,663.7 917.2,661.3 924.3,658.8 931.0,656.2 937.2,653.4 943.1,650.7 948.4,647.8 953.4,644.9 957.8,641.9 961.9,638.9 965.4,635.9 968.6,632.8 971.3,629.7 973.5,626.5 975.3,623.4 976.7,620.2 977.7,617.1 978.2,613.9 978.4,610.8 978.1,607.7 977.5,604.6 976.4,601.5 975.1,598.5 973.3,595.5 971.2,592.5 968.8,589.6 966.0,586.8 963.0,583.9 959.6,581.2 955.9,578.4 952.0,575.8 947.8,573.2 943.3,570.7 938.6,568.2 933.6,565.8 928.5,563.5 923.1,561.2 917.5,559.0 911.7,556.9 905.7,554.8 899.6,552.9 893.2,551.0 886.8,549.1 880.2,547.4 873.4,545.7 866.5,544.1 859.5,542.6 852.4,541.2 845.2,539.9 837.9,538.6 830.5,537.4 823.0,536.3 815.4,535.3 807.8,534.3 800.1,533.4 792.4,532.6 784.6,531.9 776.8,531.3 768.9,530.8 761.1,530.3 753.2,529.9 745.3,529.6 737.4,529.4 729.5,529.3 721.6,529.2 713.7,529.2 705.8,529.3 698.0,529.5 690.2,529.8 682.4,530.1 674.7,530.6 667.0,531.1 659.4,531.7 651.9,532.4 644.4,533.1 637.1,534.0 629.8,534.9 622.5,535.9 615.4,536.9 608.4,538.1 601.6,539.3 594.8,540.7 588.2,542.1 581.7,543.5 575.3,545.1 569.1,546.7 563.1,548.5 557.3,550.2 551.6,552.1 546.1,554.1 540.8,556.1 535.8,558.2" fill="#b2b2b2"/><polygon points="483.4,602.9 483.5,599.7 483.9,596.6 484.8,593.5 486.0,590.5 487.5,587.5 489.4,584.6 491.7,581.7 494.3,578.9 497.2,576.1 500.4,573.4 503.8,570.8 507.6,568.2 511.6,565.7 516.0,563.3 520.5,560.9 525.3,558.7 530.3,556.4 535.6,554.3 541.0,552.2 546.7,550.2 552.5,548.4 558.6,546.5 564.8,544.8 571.2,543.1 577.7,541.5 584.4,540.0 591.2,538.6 598.1,537.2 605.2,536.0 612.4,534.8 619.7,533.7 627.1,532.7 634.6,531.7 642.2,530.9 649.9,530.1 657.6,529.4 665.4,528.8 673.3,528.3 681.2,527.9 689.1,527.5 697.1,527.2 705.2,527.0 713.2,526.9 721.3,526.9 729.4,527.0 737.5,527.1 745.6,527.3 753.7,527.6 761.8,528.0 769.9,528.5 778.0,529.0 786.0,529.7 794.0,530.4 801.9,531.2 809.8,532.1 817.6,533.0 825.4,534.1 833.0,535.2 840.6,536.5 848.2,537.7 855.6,539.1 862.9,540.6 870.1,542.1 877.2,543.7 884.2,545.4 891.0,547.2 897.6,549.1 904.1,551.0 910.5,553.0 916.7,555.1 922.6,557.3 928.4,559.5 934.0,561.9 939.4,564.2 944.5,566.7 949.4,569.2 954.0,571.8 958.4,574.5 962.5,577.2 966.3,580.0 969.9,582.9 973.1,585.8 976.0,588.7 978.5,591.7 980.7,594.7 982.6,597.8 984.1,601.0 985.2,604.1 985.9,607.3 986.2,610.5 986.2,613.7 985.8,618.2 985.3,621.5 984.4,624.8 983.0,628.1 981.2,631.4 979.0,634.6 976.2,637.9 973.0,641.1 969.4,644.3 965.3,647.5 960.7,650.6 955.7,653.6 950.2,656.6 944.2,659.5 937.8,662.4 930.9,665.1 923.5,667.8 915.8,670.3 907.6,672.8 899.0,675.1 890.0,677.3 880.7,679.4 871.0,681.3 860.9,683.1 850.6,684.7 839.9,686.2 829.0,687.5 817.8,688.6 806.5,689.6 794.9,690.4 783.2,691.0 771.4,691.4 759.4,691.6 747.5,691.7 735.4,691.5 723.4,691.2 711.5,690.7 699.5,690.1 687.8,689.2 676.1,688.2 664.5,687.0 653.2,685.6 642.1,684.1 631.2,682.4 620.6,680.6 610.3,678.6 600.3,676.5 590.6,674.2 581.3,671.8 572.4,669.4 563.8,666.8 555.6,664.1 547.9,661.3 540.6,658.4 533.7,655.5 527.2,652.4 521.2,649.4 515.6,646.2 510.5,643.1 505.9,639.9 501.7,636.6 497.9,633.4 494.6,630.1 491.7,626.8 489.3,623.5 487.3,620.2 485.8,617.0 484.6,613.7 483.9,610.5 483.6,607.3" fill="url(#wall)"/><polygon points="525.3,558.7 520.5,560.9 515.9,563.3 511.6,565.7 507.6,568.2 503.8,570.8 500.4,573.4 497.2,576.1 494.3,578.9 491.7,581.7 489.5,584.6 487.5,587.5 486.0,590.5 484.8,593.5 483.9,596.6 483.5,599.7 483.4,602.9 483.7,606.0 484.4,609.2 485.6,612.5 487.2,615.7 489.1,619.0 491.6,622.2 494.4,625.5 497.7,628.7 501.5,631.9 505.7,635.1 510.4,638.3 515.5,641.4 521.1,644.5 527.1,647.6 533.5,650.6 540.4,653.5 547.8,656.3 555.5,659.1 563.7,661.8 572.3,664.3 581.2,666.8 590.6,669.2 600.2,671.4 610.3,673.5 620.6,675.4 631.2,677.3 642.1,678.9 653.2,680.4 664.6,681.8 676.1,683.0 687.8,684.0 699.6,684.9 711.5,685.5 723.5,686.0 735.5,686.3 747.6,686.5 759.6,686.4 771.5,686.2 783.3,685.7 795.1,685.1 806.6,684.4 818.0,683.4 829.2,682.3 840.1,681.0 850.8,679.5 861.2,677.9 871.2,676.2 880.9,674.3 890.3,672.2 899.3,670.0 907.9,667.7 916.1,665.3 923.8,662.8 931.2,660.2 938.1,657.4 944.5,654.6 950.5,651.7 956.0,648.8 961.0,645.7 965.6,642.7 969.7,639.5 973.4,636.4 976.6,633.2 979.3,630.0 981.5,626.7 983.4,623.5 984.7,620.2 985.7,617.0 986.2,613.7 986.3,610.5 985.9,607.3 985.2,604.1 984.1,601.0 982.6,597.8 980.7,594.7 978.5,591.7 976.0,588.7 973.1,585.7 969.9,582.8 966.3,580.0 962.5,577.2 958.4,574.5 954.0,571.8 949.4,569.2 944.5,566.7 939.4,564.3 934.0,561.9 928.4,559.5 922.6,557.3 916.7,555.1 910.5,553.0 904.2,551.0 897.6,549.1 891.0,547.2 884.2,545.4 877.2,543.7 870.1,542.1 862.9,540.6 855.6,539.1 848.2,537.7 840.7,536.4 833.0,535.2 825.4,534.1 817.6,533.0 809.8,532.1 801.9,531.2 793.9,530.4 786.0,529.7 778.0,529.0 769.9,528.5 761.8,528.0 753.7,527.6 745.6,527.3 737.5,527.1 729.4,526.9 721.3,526.9 713.2,526.9 705.2,527.0 697.1,527.2 689.1,527.5 681.2,527.8 673.3,528.3 665.4,528.8 657.6,529.4 649.9,530.1 642.2,530.9 634.6,531.7 627.1,532.7 619.7,533.7 612.4,534.8 605.2,536.0 598.1,537.2 591.2,538.6 584.4,540.0 577.7,541.5 571.2,543.1 564.8,544.8 558.6,546.5 552.5,548.3 546.7,550.3 541.0,552.2 535.6,554.3 530.3,556.4" fill="#bababa"/><polygon points="475.3,573.5 475.5,570.5 476.0,567.6 476.9,564.6 478.2,561.7 479.9,558.9 481.9,556.0 484.3,553.3 487.0,550.6 490.1,548.0 493.4,545.4 497.1,542.9 501.0,540.4 505.2,538.0 509.7,535.7 514.4,533.5 519.4,531.3 524.6,529.2 530.1,527.1 535.7,525.2 541.6,523.3 547.6,521.5 553.9,519.7 560.3,518.1 566.9,516.5 573.6,515.0 580.5,513.5 587.5,512.2 594.7,510.9 602.0,509.7 609.4,508.6 616.9,507.6 624.5,506.6 632.3,505.7 640.1,504.9 648.0,504.1 655.9,503.5 663.9,502.9 672.0,502.4 680.2,502.0 688.3,501.7 696.6,501.4 704.8,501.2 713.1,501.1 721.4,501.1 729.8,501.2 738.1,501.3 746.4,501.5 754.7,501.8 763.1,502.2 771.4,502.6 779.6,503.1 787.9,503.8 796.1,504.4 804.3,505.2 812.4,506.0 820.4,506.9 828.4,507.9 836.3,509.0 844.2,510.2 851.9,511.4 859.6,512.7 867.1,514.1 874.6,515.6 881.9,517.1 889.1,518.7 896.1,520.4 903.0,522.2 909.7,524.0 916.3,525.9 922.7,527.9 928.9,530.0 934.9,532.1 940.7,534.3 946.3,536.6 951.6,539.0 956.7,541.4 961.5,543.9 966.1,546.4 970.4,549.0 974.4,551.7 978.1,554.4 981.5,557.1 984.5,560.0 987.3,562.9 989.6,565.8 991.6,568.7 993.2,571.7 994.5,574.8 995.3,577.8 995.7,580.9 995.7,584.0 993.9,608.0 993.4,611.3 992.5,614.6 991.2,617.9 989.4,621.2 987.1,624.5 984.4,627.8 981.1,631.1 977.4,634.3 973.2,637.5 968.6,640.6 963.4,643.7 957.8,646.7 951.6,649.7 945.0,652.6 938.0,655.4 930.4,658.0 922.4,660.6 914.0,663.1 905.1,665.5 895.9,667.7 886.2,669.8 876.2,671.8 865.8,673.5 855.0,675.2 844.0,676.7 832.7,678.0 821.2,679.2 809.4,680.1 797.4,680.9 785.3,681.6 773.0,682.0 760.6,682.2 748.2,682.3 735.8,682.2 723.3,681.8 710.9,681.3 698.6,680.6 686.4,679.8 674.3,678.7 662.3,677.5 650.6,676.1 639.1,674.6 627.8,672.9 616.9,671.0 606.2,669.0 595.9,666.8 585.9,664.6 576.2,662.1 567.0,659.6 558.2,657.0 549.8,654.3 541.8,651.4 534.3,648.5 527.2,645.6 520.5,642.5 514.4,639.4 508.7,636.2 503.5,633.0 498.7,629.8 494.4,626.5 490.6,623.2 487.2,620.0 484.3,616.6 481.9,613.3 479.9,610.0 478.3,606.8 477.2,603.5 476.5,600.2 476.3,597.0" fill="url(#wall)"/><polygon points="519.4,531.3 514.4,533.5 509.7,535.7 505.2,538.0 501.0,540.4 497.1,542.9 493.4,545.4 490.1,548.0 487.0,550.6 484.3,553.3 481.9,556.1 479.9,558.9 478.2,561.7 476.9,564.6 476.0,567.6 475.5,570.5 475.3,573.6 475.6,576.6 476.3,579.7 477.4,582.8 478.9,585.9 480.9,589.0 483.4,592.1 486.3,595.3 489.7,598.4 493.5,601.5 497.8,604.6 502.6,607.7 507.8,610.7 513.6,613.7 519.8,616.6 526.4,619.5 533.5,622.3 541.1,625.1 549.1,627.8 557.6,630.4 566.5,632.9 575.8,635.2 585.4,637.5 595.5,639.7 605.9,641.7 616.6,643.6 627.6,645.4 639.0,647.0 650.5,648.5 662.4,649.8 674.4,651.0 686.5,652.0 698.8,652.8 711.3,653.4 723.8,653.9 736.3,654.2 748.8,654.3 761.3,654.3 773.7,654.1 786.1,653.6 798.3,653.1 810.3,652.3 822.2,651.4 833.8,650.3 845.2,649.0 856.3,647.6 867.1,646.1 877.5,644.3 887.6,642.5 897.3,640.5 906.6,638.4 915.6,636.2 924.0,633.8 932.1,631.4 939.6,628.8 946.7,626.2 953.4,623.4 959.5,620.6 965.2,617.8 970.4,614.9 975.1,611.9 979.3,608.9 983.0,605.8 986.2,602.7 988.9,599.6 991.2,596.5 993.0,593.4 994.4,590.2 995.2,587.1 995.7,584.0 995.7,580.9 995.3,577.8 994.5,574.7 993.2,571.7 991.6,568.7 989.6,565.8 987.3,562.8 984.6,560.0 981.5,557.1 978.1,554.4 974.4,551.7 970.4,549.0 966.1,546.4 961.5,543.9 956.7,541.4 951.6,539.0 946.3,536.6 940.7,534.3 934.9,532.1 928.9,530.0 922.7,527.9 916.3,525.9 909.7,524.0 903.0,522.2 896.1,520.4 889.1,518.7 881.9,517.1 874.6,515.6 867.1,514.1 859.6,512.7 851.9,511.4 844.2,510.2 836.3,509.0 828.4,507.9 820.4,507.0 812.4,506.0 804.3,505.2 796.1,504.4 787.9,503.7 779.6,503.1 771.4,502.6 763.1,502.2 754.7,501.8 746.4,501.5 738.1,501.3 729.7,501.2 721.4,501.1 713.1,501.1 704.8,501.2 696.6,501.4 688.3,501.7 680.2,502.0 672.0,502.4 663.9,502.9 655.9,503.5 648.0,504.2 640.1,504.9 632.3,505.7 624.6,506.6 616.9,507.5 609.4,508.6 602.0,509.7 594.7,510.9 587.5,512.2 580.5,513.5 573.6,515.0 566.9,516.5 560.3,518.1 553.9,519.7 547.6,521.5 541.6,523.3 535.7,525.2 530.1,527.1 524.6,529.2" fill="#b8b8b8"/><polygon points="480.3,554.7 480.4,551.9 480.9,549.1 481.7,546.4 483.0,543.7 484.6,541.0 486.6,538.4 488.9,535.8 491.5,533.3 494.4,530.9 497.7,528.4 501.2,526.1 505.1,523.8 509.2,521.6 513.6,519.4 518.2,517.3 523.1,515.2 528.2,513.3 533.5,511.4 539.1,509.5 544.8,507.7 550.8,506.0 556.9,504.4 563.2,502.9 569.7,501.4 576.3,499.9 583.1,498.6 590.0,497.3 597.0,496.1 604.2,495.0 611.5,494.0 618.9,493.0 626.4,492.1 634.0,491.2 641.7,490.5 649.5,489.8 657.3,489.2 665.2,488.6 673.2,488.2 681.2,487.8 689.2,487.5 697.3,487.2 705.5,487.1 713.6,487.0 721.8,486.9 730.0,487.0 738.2,487.1 746.5,487.3 754.7,487.6 762.9,487.9 771.0,488.4 779.2,488.8 787.3,489.4 795.4,490.1 803.5,490.8 811.4,491.6 819.4,492.4 827.2,493.4 835.0,494.4 842.8,495.4 850.4,496.6 857.9,497.8 865.3,499.1 872.6,500.5 879.8,501.9 886.9,503.5 893.8,505.0 900.6,506.7 907.2,508.4 913.7,510.2 919.9,512.1 926.0,514.0 931.9,516.0 937.6,518.1 943.0,520.2 948.3,522.4 953.3,524.7 958.0,527.0 962.5,529.4 966.7,531.8 970.6,534.3 974.2,536.8 977.5,539.4 980.5,542.1 983.1,544.8 985.4,547.5 987.3,550.2 988.9,553.0 990.0,555.9 990.8,558.7 991.2,561.6 991.1,564.5 989.7,583.5 989.2,586.5 988.3,589.6 987.0,592.6 985.1,595.7 982.9,598.7 980.2,601.8 977.0,604.8 973.3,607.7 969.2,610.7 964.5,613.6 959.5,616.4 953.9,619.2 947.9,621.9 941.4,624.6 934.4,627.1 927.0,629.6 919.1,632.0 910.9,634.3 902.1,636.4 893.0,638.5 883.6,640.4 873.7,642.2 863.5,643.9 853.0,645.4 842.2,646.8 831.1,648.0 819.8,649.0 808.3,649.9 796.5,650.6 784.6,651.2 772.6,651.6 760.5,651.8 748.4,651.9 736.2,651.8 724.0,651.5 711.8,651.0 699.7,650.4 687.8,649.6 675.9,648.6 664.2,647.5 652.7,646.2 641.4,644.8 630.4,643.2 619.6,641.5 609.2,639.7 599.0,637.7 589.2,635.6 579.8,633.4 570.7,631.1 562.0,628.6 553.8,626.1 545.9,623.5 538.5,620.9 531.5,618.1 525.0,615.3 518.9,612.4 513.3,609.5 508.1,606.6 503.4,603.6 499.1,600.6 495.4,597.5 492.0,594.5 489.1,591.5 486.7,588.4 484.7,585.4 483.1,582.3 482.0,579.3 481.3,576.3 481.0,573.3" fill="url(#wall)"/><polygon points="523.1,515.2 518.2,517.3 513.6,519.4 509.2,521.6 505.1,523.8 501.3,526.1 497.7,528.4 494.4,530.8 491.5,533.3 488.9,535.8 486.6,538.4 484.6,541.0 483.0,543.7 481.7,546.4 480.9,549.1 480.4,551.9 480.3,554.7 480.6,557.6 481.3,560.5 482.4,563.3 484.0,566.2 486.0,569.2 488.4,572.1 491.3,575.0 494.7,577.9 498.5,580.8 502.7,583.7 507.4,586.5 512.6,589.3 518.3,592.1 524.4,594.8 530.9,597.5 537.9,600.2 545.4,602.7 553.3,605.2 561.6,607.6 570.3,609.9 579.4,612.1 588.9,614.2 598.7,616.2 608.9,618.1 619.4,619.9 630.3,621.5 641.3,623.0 652.7,624.4 664.2,625.6 676.0,626.7 687.9,627.6 699.9,628.4 712.1,629.0 724.3,629.4 736.6,629.7 748.8,629.8 761.0,629.8 773.2,629.5 785.3,629.2 797.2,628.6 809.0,627.9 820.6,627.1 832.0,626.1 843.1,624.9 854.0,623.6 864.5,622.1 874.8,620.6 884.7,618.8 894.2,617.0 903.3,615.0 912.1,613.0 920.4,610.8 928.3,608.5 935.7,606.1 942.7,603.7 949.2,601.2 955.3,598.6 960.8,595.9 965.9,593.2 970.6,590.4 974.7,587.6 978.4,584.8 981.6,581.9 984.3,579.0 986.6,576.1 988.4,573.2 989.7,570.3 990.6,567.4 991.1,564.5 991.2,561.6 990.8,558.7 990.0,555.9 988.8,553.0 987.3,550.2 985.4,547.5 983.1,544.7 980.5,542.1 977.5,539.4 974.2,536.8 970.6,534.3 966.7,531.8 962.5,529.4 958.0,527.0 953.3,524.7 948.3,522.4 943.1,520.2 937.6,518.1 931.9,516.0 926.0,514.0 919.9,512.1 913.7,510.2 907.2,508.4 900.6,506.7 893.8,505.0 886.9,503.5 879.8,501.9 872.6,500.5 865.3,499.1 857.9,497.8 850.4,496.6 842.8,495.4 835.0,494.4 827.2,493.4 819.4,492.4 811.4,491.6 803.4,490.8 795.4,490.1 787.3,489.4 779.2,488.8 771.0,488.4 762.9,487.9 754.7,487.6 746.5,487.3 738.2,487.1 730.0,487.0 721.8,486.9 713.6,487.0 705.5,487.1 697.3,487.2 689.2,487.5 681.2,487.8 673.2,488.2 665.2,488.6 657.3,489.2 649.5,489.8 641.7,490.5 634.0,491.2 626.4,492.1 618.9,493.0 611.5,494.0 604.2,495.0 597.0,496.1 590.0,497.3 583.1,498.6 576.3,499.9 569.7,501.4 563.2,502.9 556.9,504.4 550.8,506.0 544.8,507.7 539.1,509.5 533.5,511.4 528.2,513.3" fill="#b8b8b8"/><polygon points="486.1,524.8 486.2,522.2 486.6,519.7 487.4,517.3 488.6,514.9 490.1,512.5 492.0,510.1 494.2,507.8 496.8,505.5 499.6,503.3 502.8,501.1 506.2,499.0 510.0,497.0 514.0,494.9 518.2,493.0 522.7,491.1 527.5,489.3 532.5,487.5 537.7,485.8 543.1,484.1 548.7,482.5 554.5,481.0 560.5,479.5 566.7,478.1 573.0,476.8 579.5,475.5 586.2,474.3 593.0,473.1 599.9,472.0 606.9,471.0 614.1,470.1 621.3,469.2 628.7,468.4 636.1,467.6 643.7,466.9 651.3,466.3 659.0,465.8 666.8,465.3 674.6,464.8 682.5,464.5 690.4,464.2 698.4,464.0 706.4,463.8 714.4,463.7 722.4,463.7 730.5,463.8 738.5,463.9 746.6,464.1 754.7,464.3 762.7,464.6 770.8,465.0 778.8,465.4 786.8,466.0 794.7,466.5 802.6,467.2 810.5,467.9 818.3,468.7 826.0,469.5 833.6,470.4 841.2,471.4 848.7,472.4 856.1,473.6 863.4,474.7 870.5,476.0 877.6,477.3 884.5,478.6 891.3,480.1 897.9,481.6 904.4,483.1 910.7,484.7 916.9,486.4 922.8,488.2 928.6,490.0 934.1,491.8 939.5,493.8 944.6,495.7 949.4,497.8 954.0,499.9 958.4,502.0 962.5,504.2 966.3,506.4 969.8,508.7 973.0,511.0 975.9,513.4 978.4,515.8 980.6,518.2 982.5,520.7 983.9,523.2 985.0,525.8 985.8,528.3 986.1,530.9 986.0,533.5 983.8,563.9 983.3,566.7 982.4,569.5 981.0,572.4 979.2,575.2 976.9,578.0 974.2,580.8 971.1,583.6 967.5,586.3 963.4,589.0 958.8,591.7 953.9,594.3 948.4,596.9 942.5,599.4 936.1,601.8 929.3,604.2 922.1,606.5 914.4,608.7 906.3,610.8 897.9,612.8 889.0,614.6 879.8,616.4 870.2,618.1 860.2,619.6 850.0,621.0 839.5,622.2 828.7,623.4 817.7,624.3 806.5,625.2 795.1,625.8 783.5,626.4 771.9,626.7 760.1,626.9 748.3,627.0 736.4,626.9 724.6,626.6 712.8,626.2 701.0,625.6 689.4,624.9 677.9,624.0 666.5,623.0 655.3,621.8 644.3,620.5 633.6,619.0 623.1,617.4 612.9,615.7 603.0,613.9 593.5,612.0 584.3,610.0 575.4,607.8 567.0,605.6 558.9,603.3 551.2,600.9 544.0,598.4 537.1,595.9 530.7,593.3 524.8,590.7 519.3,588.0 514.2,585.2 509.6,582.5 505.4,579.7 501.6,576.9 498.3,574.1 495.5,571.3 493.0,568.4 491.1,565.6 489.5,562.8 488.3,560.0 487.6,557.2 487.2,554.5" fill="url(#wall)"/><polygon points="527.5,489.3 522.7,491.1 518.2,493.0 514.0,494.9 510.0,497.0 506.2,499.0 502.8,501.1 499.6,503.3 496.8,505.5 494.2,507.8 492.0,510.1 490.1,512.5 488.6,514.8 487.4,517.3 486.6,519.7 486.2,522.2 486.1,524.8 486.4,527.3 487.2,529.9 488.4,532.5 489.9,535.1 491.9,537.7 494.4,540.3 497.2,542.9 500.5,545.5 504.3,548.1 508.5,550.6 513.2,553.2 518.3,555.7 523.8,558.2 529.8,560.6 536.3,563.0 543.1,565.4 550.4,567.6 558.2,569.9 566.3,572.0 574.8,574.1 583.7,576.0 593.0,577.9 602.6,579.7 612.6,581.4 622.8,582.9 633.4,584.4 644.2,585.7 655.3,587.0 666.6,588.0 678.0,589.0 689.6,589.8 701.4,590.5 713.2,591.0 725.1,591.4 737.1,591.7 749.0,591.8 760.9,591.7 772.8,591.5 784.5,591.2 796.2,590.7 807.7,590.1 819.0,589.3 830.1,588.4 840.9,587.4 851.5,586.2 861.8,584.9 871.8,583.5 881.5,582.0 890.8,580.4 899.7,578.6 908.2,576.8 916.4,574.8 924.1,572.8 931.3,570.7 938.2,568.5 944.6,566.3 950.5,563.9 956.0,561.6 961.0,559.2 965.6,556.7 969.7,554.2 973.3,551.6 976.4,549.1 979.1,546.5 981.4,543.9 983.2,541.3 984.6,538.7 985.5,536.1 986.0,533.5 986.1,530.9 985.8,528.3 985.0,525.8 983.9,523.2 982.4,520.7 980.6,518.2 978.4,515.8 975.9,513.4 973.0,511.0 969.8,508.7 966.3,506.4 962.5,504.2 958.4,502.0 954.0,499.8 949.4,497.8 944.6,495.7 939.5,493.8 934.1,491.8 928.6,490.0 922.8,488.2 916.9,486.4 910.7,484.7 904.4,483.1 897.9,481.6 891.3,480.1 884.5,478.6 877.6,477.3 870.5,476.0 863.4,474.7 856.1,473.6 848.7,472.4 841.2,471.4 833.6,470.4 826.0,469.5 818.3,468.7 810.5,467.9 802.6,467.2 794.7,466.5 786.8,466.0 778.8,465.4 770.8,465.0 762.7,464.6 754.7,464.3 746.6,464.1 738.5,463.9 730.5,463.8 722.4,463.7 714.4,463.7 706.3,463.8 698.4,464.0 690.4,464.2 682.5,464.5 674.6,464.8 666.8,465.3 659.0,465.7 651.3,466.3 643.7,466.9 636.1,467.6 628.7,468.4 621.3,469.2 614.1,470.1 606.9,471.0 599.9,472.0 593.0,473.1 586.2,474.3 579.5,475.5 573.0,476.8 566.7,478.1 560.5,479.5 554.5,481.0 548.7,482.5 543.1,484.1 537.7,485.8 532.5,487.5" fill="#ababab"/><g><path d="M735.2 516L741.2 163" stroke="#35c463" stroke-width="1.3"/><path d="M734.3 517.5V425" stroke="#3ddc72" stroke-width="1.6"/><path d="M734.3 412L729.3 433.5Q734.3 436.5 739.3 433.5Z" fill="#3ddc72"/><path d="M699 540L628 530.5" stroke="#e24646" stroke-width="1.3"/><path d="M616.5 528.5L635.5 524.3Q637.5 529.5 634 535Z" fill="#e24646"/><path d="M717.5 553.5L684 574" stroke="#2b7cf0" stroke-width="1.3" stroke-dasharray="2.2 1"/><path d="M672.8 580.2L680 568.5Q686.8 569.5 688 577.5Z" fill="#2b7cf0"/><path d="M661.3 488.5V459.5L689.5 462.5" stroke="#2f74e6" stroke-width="1.2" fill="none"/><path d="M661.3 459.5L674.5 461L661.3 473Z" fill="#2f74e6" opacity="0.45"/><path d="M661.3 473L674.5 461" stroke="#2f74e6" stroke-width="1.1"/><path d="M698.3 515.5V484L713 476" stroke="#e24646" stroke-width="1.1" fill="none"/><path d="M698.3 497L706.3 479.6" stroke="#e24646" stroke-width="1" stroke-dasharray="1.5 1"/><path d="M623.5 553L637.5 546.5M623.5 553L652.5 559M633 555L637.5 546.5" stroke="#3ddc72" stroke-width="1.1" fill="none"/></g><path d="M1222.8 203.5V181" stroke="#2fc562" stroke-width="1.7"/><path d="M1222.8 203.7L1203 200.6" stroke="#dd4040" stroke-width="1.1"/><path d="M1222.8 203.7L1212.6 209" stroke="#2b74e8" stroke-width="1.3" stroke-dasharray="2 0.7"/><text x="1222.8" y="179.3" font-size="10.5" font-weight="bold" text-anchor="middle" fill="#34d06a" font-family='"Liberation Sans",sans-serif'>Y</text><text x="1193.6" y="205.3" font-size="10.5" font-weight="bold" text-anchor="middle" fill="#dd4040" font-family='"Liberation Sans",sans-serif'>X</text><text x="1205.2" y="219.3" font-size="10.5" font-weight="bold" font-style="italic" text-anchor="middle" fill="#2b74e8" font-family='"Liberation Sans",sans-serif'>Z</text></svg>
<div class="b" style="left:50px;top:165px;width:83px;height:18px;background:rgba(48,48,48,0.85);border-radius:4px;"></div>
<div class="t" style="left:54px;top:164.5px;height:20px;line-height:20px;font-size:13.6px;color:#dcdcdc;letter-spacing:-0.094px;-webkit-text-stroke:0.5px #dcdcdc;text-shadow:0 1px 1px #111;">Perspective</div>
<div class="b" style="left:588px;top:165px;width:132px;height:18px;background:rgba(48,48,48,0.85);border-radius:4px;"></div>
<div class="t" style="left:593px;top:164.5px;height:20px;line-height:20px;font-size:13.6px;color:#dcdcdc;letter-spacing:0.271px;-webkit-text-stroke:0.5px #dcdcdc;text-shadow:0 1px 1px #111;">Default Camera</div>
<svg class="b" style="left:697px;top:166px;" width="22" height="16" viewBox="0 0 22 16"><path d="M3.5 5.5H12.5V13.5H3.5Z" fill="none" stroke="#8f9bd0" stroke-width="1.4"/><path d="M3.5 5.5V3.2H10.5" fill="none" stroke="#8f9bd0" stroke-width="1.3"/><path d="M13 8.5L17 6V12L13 10" fill="#8f9bd0"/><circle cx="16" cy="9.6" r="1.2" fill="#8f9bd0"/></svg>
<div class="b" style="left:50px;top:392.5px;width:60px;height:18.5px;background:rgba(44,44,44,0.8);border-radius:4px;"></div>
<div class="t" style="left:53px;top:392.0px;height:20px;line-height:20px;font-size:13.6px;color:#dcdcdc;letter-spacing:0.438px;-webkit-text-stroke:0.5px #dcdcdc;text-shadow:0 1px 1px #111;">Move</div>
<svg class="b" style="left:92px;top:395px;" width="14" height="14" viewBox="0 0 14 14"><path d="M7 0.8V13.2M0.8 7H13.2M5 2.8L7 0.8L9 2.8M5 11.2L7 13.2L9 11.2M2.8 5L0.8 7L2.8 9M11.2 5L13.2 7L11.2 9" stroke="#c9c9c9" stroke-width="1.1" fill="none"/></svg>
<div class="b" style="left:1063px;top:859.5px;width:198px;height:17.0px;background:rgba(34,34,34,0.75);border-radius:4px;"></div>
<div class="t" style="left:1065.5px;top:858.5px;height:20px;line-height:20px;font-size:13.6px;color:#dcdcdc;letter-spacing:0.128px;-webkit-text-stroke:0.5px #dcdcdc;text-shadow:0 1px 1px #111;">Grid Spacing : 50 cm</div>
<svg class="b" style="left:0px;top:0px;" width="1918" height="170" viewBox="0 0 1918 170"><path d="M1175 148.5V140.6M1178.5 147.5V139.6M1181.9 147.8V140.1M1185.3 149V142.8" stroke="#939393" stroke-width="2.1" stroke-linecap="round" fill="none"/><path d="M1170.2 146.6L1174.5 151.5" stroke="#939393" stroke-width="2.6" stroke-linecap="round"/><path d="M1173.9 146.5H1186.35V150.5C1186.35 154.2 1183.5 156.6 1180 156.6C1176.3 156.6 1174.8 154.6 1172.8 151.2Z" fill="#939393"/><path d="M1203.3 142V150" stroke="#939393" stroke-width="2.4"/><path d="M1198.6 143.9L1203.3 138.7L1208 143.9Z" fill="#939393" stroke="#939393" stroke-width="0.6" stroke-linejoin="round"/><path d="M1195 149.2H1211.8L1203.4 156.5Z" fill="#939393" stroke="#939393" stroke-width="0.5" stroke-linejoin="round"/><path d="M1232.2 141.2A8.5 8.5 0 1 1 1222.6 141.6" fill="none" stroke="#939393" stroke-width="2"/><circle cx="1228.2" cy="147.6" r="2.7" fill="#939393"/><circle cx="1232.8" cy="140.8" r="2.4" fill="#939393"/><rect x="1245.8" y="139.8" width="15.6" height="15.8" rx="1.6" fill="none" stroke="#939393" stroke-width="2"/><path d="M1245.8 145.6H1255.6V155.6" fill="none" stroke="#939393" stroke-width="2"/></svg>
<div class="b" style="left:1268px;top:97px;width:50px;height:893px;background:#2b2b2b;"></div>
<div class="b" style="left:1271px;top:132px;width:45px;height:44px;background:#3d3d3d;border-radius:5px;"></div>
<div class="b" style="left:1271px;top:189px;width:45px;height:134px;background:#3d3d3d;border-radius:5px;"></div>
<div class="b" style="left:1271px;top:233px;width:45px;height:1px;background:#303030;"></div>
<div class="b" style="left:1271px;top:278px;width:45px;height:1px;background:#303030;"></div>
<div class="b" style="left:1271px;top:336px;width:45px;height:134px;background:#3d3d3d;border-radius:5px;"></div>
<div class="b" style="left:1271px;top:380px;width:45px;height:1px;background:#303030;"></div>
<div class="b" style="left:1271px;top:425px;width:45px;height:1px;background:#303030;"></div>
<div class="b" style="left:1271px;top:476px;width:45px;height:90px;background:#3d3d3d;border-radius:5px;"></div>
<div class="b" style="left:1271px;top:520px;width:45px;height:1px;background:#303030;"></div>
<div class="b" style="left:1271px;top:572px;width:45px;height:44px;background:#3d3d3d;border-radius:5px;"></div>
<div class="b" style="left:1271px;top:629px;width:45px;height:134px;background:#3d3d3d;border-radius:5px;"></div>
<div class="b" style="left:1271px;top:674px;width:45px;height:1px;background:#303030;"></div>
<div class="b" style="left:1271px;top:718px;width:45px;height:1px;background:#303030;"></div>
<div class="b" style="left:1271px;top:789px;width:45px;height:45px;background:#3d3d3d;border-radius:5px;"></div>
<svg class="b" style="left:0px;top:0px;" width="1918" height="1017" viewBox="0 0 1918 1017"><circle cx="1300" cy="147.8" r="7.5" fill="#c5cffa"/><path d="M1284 142V164.2H1306.5" fill="none" stroke="#c5cffa" stroke-width="2.4"/><path d="M1279.2 145.5L1284 140.6L1288.8 145.5M1303 159.4L1307.8 164.2L1303 169" fill="none" stroke="#c5cffa" stroke-width="2.4"/><rect x="1282" y="199.5" width="23.5" height="23.5" fill="none" stroke="#6fd0f6" stroke-width="2.2"/><path d="M1315 233L1315 226.5L1308.5 233Z" fill="#9a9a9a"/><path d="M1293.5 241.5L1306.0 248.2V263.8L1293.5 270.5L1281.0 263.8V248.2Z" fill="#6fd0f6"/><path d="M1281.0 248.2L1293.5 255L1306.0 248.2M1293.5 255V270.5" stroke="#3d3d3d" stroke-width="1.6" fill="none"/><path d="M1315 278L1315 271.5L1308.5 278Z" fill="#9a9a9a"/><path d="M1281 288.5H1306M1293.5 288.5V313.5M1288 313.5H1299" stroke="#6fd0f6" stroke-width="2.2" fill="none"/><path d="M1315 323L1315 316.5L1308.5 323Z" fill="#9a9a9a"/><circle cx="1293.5" cy="358" r="7.4" fill="#5fd06d"/><circle cx="1293.5" cy="358" r="11.3" fill="none" stroke="#d8d8d8" stroke-width="1.2" stroke-dasharray="3 2.2"/><rect x="1280.1" y="347.6" width="3.8" height="3.8" fill="#3d3d3d" stroke="#e0e0e0" stroke-width="1.1"/><rect x="1291.6" y="344.1" width="3.8" height="3.8" fill="#3d3d3d" stroke="#e0e0e0" stroke-width="1.1"/><rect x="1303.1" y="347.6" width="3.8" height="3.8" fill="#3d3d3d" stroke="#e0e0e0" stroke-width="1.1"/><rect x="1280.1" y="364.6" width="3.8" height="3.8" fill="#3d3d3d" stroke="#e0e0e0" stroke-width="1.1"/><rect x="1291.6" y="368.1" width="3.8" height="3.8" fill="#3d3d3d" stroke="#e0e0e0" stroke-width="1.1"/><rect x="1303.1" y="364.6" width="3.8" height="3.8" fill="#3d3d3d" stroke="#e0e0e0" stroke-width="1.1"/><rect x="1279.3999999999999" y="356.1" width="3.8" height="3.8" fill="#3d3d3d" stroke="#e0e0e0" stroke-width="1.1"/><rect x="1303.8" y="356.1" width="3.8" height="3.8" fill="#3d3d3d" stroke="#e0e0e0" stroke-width="1.1"/><path d="M1315 380L1315 373.5L1308.5 380Z" fill="#9a9a9a"/><path d="M1294.0 388.8L1301.134 392.9L1294.0 397L1286.866 392.9Z" fill="#6fe07c"/><path d="M1286.866 392.9L1294.0 397V405.2L1286.866 401.1Z" fill="#5fd06d"/><path d="M1301.134 392.9L1294.0 397V405.2L1301.134 401.1Z" fill="#46a955"/><path d="M1286.8 401.1L1293.934 405.2L1286.8 409.3L1279.666 405.2Z" fill="#6fe07c"/><path d="M1279.666 405.2L1286.8 409.3V417.5L1279.666 413.40000000000003Z" fill="#5fd06d"/><path d="M1293.934 405.2L1286.8 409.3V417.5L1293.934 413.40000000000003Z" fill="#46a955"/><path d="M1301.2 401.1L1308.334 405.2L1301.2 409.3L1294.066 405.2Z" fill="#6fe07c"/><path d="M1294.066 405.2L1301.2 409.3V417.5L1294.066 413.40000000000003Z" fill="#5fd06d"/><path d="M1308.334 405.2L1301.2 409.3V417.5L1308.334 413.40000000000003Z" fill="#46a955"/><path d="M1315 425L1315 418.5L1308.5 425Z" fill="#9a9a9a"/><path d="M1291.84 438.75 L1295.16 438.75 L1295.34 441.66 L1298.07 443.24 L1300.68 441.93 L1302.34 444.82 L1299.91 446.43 L1299.91 449.57 L1302.34 451.18 L1300.68 454.07 L1298.07 452.76 L1295.34 454.34 L1295.16 457.25 L1291.84 457.25 L1291.66 454.34 L1288.93 452.76 L1286.32 454.07 L1284.66 451.18 L1287.09 449.57 L1287.09 446.43 L1284.66 444.82 L1286.32 441.93 L1288.93 443.24 L1291.66 441.66Z M1290.10 448.00 a3.4 3.4 0 1 0 6.8 0 a3.4 3.4 0 1 0 -6.8 0Z" fill="#ececec" fill-rule="evenodd" stroke="#ececec" stroke-width="1.3" stroke-linejoin="round"/><circle cx="1293.5" cy="435.4" r="2.6" fill="#5fd06d"/><circle cx="1304.4" cy="441.7" r="2.6" fill="#5fd06d"/><circle cx="1304.4" cy="454.3" r="2.6" fill="#5fd06d"/><circle cx="1293.5" cy="460.6" r="2.6" fill="#5fd06d"/><circle cx="1282.6" cy="454.3" r="2.6" fill="#5fd06d"/><circle cx="1282.6" cy="441.7" r="2.6" fill="#5fd06d"/><circle cx="1293.5" cy="448" r="2.6" fill="#5fd06d"/><path d="M1315 470L1315 463.5L1308.5 470Z" fill="#9a9a9a"/><path d="M1281.6 490.5L1290.7 484.3L1298.2 488.4Q1305 494.5 1306.1 506.3L1296 513.1L1286.7 507.8L1287.4 503.5L1281.6 499.9Z" fill="none" stroke="#9a97f4" stroke-width="2" stroke-linejoin="round"/><path d="M1285.4 492.6Q1294.2 496.5 1295.6 507.6" fill="none" stroke="#9a97f4" stroke-width="1.6"/><path d="M1315 520L1315 513.5L1308.5 520Z" fill="#9a9a9a"/><path d="M1281.6 533V555.8H1305" fill="none" stroke="#9a97f4" stroke-width="2.4"/><path d="M1278.2 534.2L1281.6 529.2L1285 534.2ZM1304.2 552.4L1308.6 555.8L1304.2 559.2Z" fill="#9a97f4" stroke="#9a97f4" stroke-width="1" stroke-linejoin="round"/><polygon points="1299.90,530.20 1306.31,533.90 1306.31,541.30 1299.90,545.00 1293.49,541.30 1293.49,533.90" fill="none" stroke="#9a97f4" stroke-width="1.4"/><path d="M1299.9 537.6V545M1299.9 537.6L1293.5 533.9M1299.9 537.6L1306.3 533.9" stroke="#9a97f4" stroke-width="1.2"/><path d="M1315 566L1315 559.5L1308.5 566Z" fill="#9a9a9a"/><path d="M1281.2 586.8L1293.6 594.7V608.3L1281.2 601.2Z M1294.6 580.3L1306.1 587.5V601.2L1294.6 594.7Z" fill="none" stroke="#f0a6ec" stroke-width="1.9" stroke-linejoin="miter"/><path d="M1286.6 598.8L1300.4 590" stroke="#f0a6ec" stroke-width="1.5"/><path d="M1315 616L1315 609.5L1308.5 616Z" fill="#9a9a9a"/><circle cx="1293.5" cy="651" r="9.2" fill="none" stroke="#c2cbf8" stroke-width="2.2"/><circle cx="1296.1" cy="648.6" r="6.6" fill="#c2cbf8"/><path d="M1308.3 651.0L1304.4 653.5L1304.4 648.5Z" fill="#c2cbf8"/><path d="M1304.0 661.5L1299.4 660.5L1303.0 656.9Z" fill="#c2cbf8"/><path d="M1293.5 665.8L1291.0 661.9L1296.0 661.9Z" fill="#c2cbf8"/><path d="M1283.0 661.5L1284.0 656.9L1287.6 660.5Z" fill="#c2cbf8"/><path d="M1278.7 651.0L1282.6 648.5L1282.6 653.5Z" fill="#c2cbf8"/><path d="M1283.0 640.5L1287.6 641.5L1284.0 645.1Z" fill="#c2cbf8"/><path d="M1293.5 636.2L1296.0 640.1L1291.0 640.1Z" fill="#c2cbf8"/><path d="M1304.0 640.5L1303.0 645.1L1299.4 641.5Z" fill="#c2cbf8"/><path d="M1315 673L1315 666.5L1308.5 673Z" fill="#9a9a9a"/><rect x="1280.5" y="693.5" width="17" height="12.5" rx="1.5" fill="none" stroke="#c2cbf8" stroke-width="1.9"/><path d="M1280.5 693V689a1.5 1.5 0 0 1 1.5-1.5H1293" fill="none" stroke="#c2cbf8" stroke-width="1.9"/><path d="M1300.5 699.5L1308 694.5V705Z" fill="#c2cbf8" stroke="#c2cbf8" stroke-width="1" stroke-linejoin="round"/><path d="M1315 718L1315 711.5L1308.5 718Z" fill="#9a9a9a"/><path d="M1281.5 727.5H1306.5L1302.5 744.5H1285.5Z" fill="none" stroke="#c2cbf8" stroke-width="1.9" stroke-linejoin="round"/><path d="M1294 733.5V754.5M1289.5 750.5L1294 755L1298.5 750.5" fill="none" stroke="#c2cbf8" stroke-width="1.7"/><path d="M1315 763L1315 756.5L1308.5 763Z" fill="#9a9a9a"/><path d="M1298.2 800.5L1293.6 797.9L1281.7 804.8L1281.7 818.5L1293.6 825.3L1305.5 818.5L1305.5 807.5" fill="none" stroke="#b2b2b2" stroke-width="2.2" stroke-linejoin="miter"/><path d="M1289.6 815L1290.2 811.6L1301.6 801.2L1304.6 804.4L1293.2 814.9Z" fill="#fafafa"/><rect x="1303" y="797.6" width="4.4" height="4.4" rx="1.2" transform="rotate(45 1305.2 799.8)" fill="#fafafa"/><path d="M1315 833.5L1315 827.0L1308.5 833.5Z" fill="#9a9a9a"/><defs><pattern id="dp4" width="3.8" height="4.0" patternUnits="userSpaceOnUse" patternTransform="translate(1276 97)"><rect width="1.7" height="1.9" fill="#4b4b4b"/></pattern></defs><rect x="1276" y="97" width="35.90" height="5.70" fill="url(#dp4)"/></svg>
<div class="b" style="left:1317px;top:96px;width:601px;height:396px;background:#1f1f1f;border-radius:4px 0 0 0;"></div>
<div class="b" style="left:1318px;top:97px;width:600px;height:28px;background:#1c1c1c;border-radius:3px 0 0 0;"></div>
<div class="b" style="left:1318px;top:97px;width:75px;height:28px;background:#2b2b2b;border-radius:3px 3px 0 0;"></div>
<div class="b" style="left:1318px;top:125px;width:600px;height:367px;background:#2b2b2b;"></div>
<div class="t" style="left:1332px;top:101.0px;height:20px;line-height:20px;font-size:14px;color:#ececec;letter-spacing:-0.067px;">Objects</div>
<div class="t" style="left:1409px;top:101.0px;height:20px;line-height:20px;font-size:14px;color:#a8a8a8;letter-spacing:-0.916px;">Takes</div>
<div class="t" style="left:1356px;top:128.8px;height:20px;line-height:20px;font-size:14px;color:#c2c2c2;letter-spacing:-0.391px;">File</div>
<div class="t" style="left:1395px;top:128.8px;height:20px;line-height:20px;font-size:14px;color:#c2c2c2;letter-spacing:-0.281px;">Edit</div>
<div class="t" style="left:1436px;top:128.8px;height:20px;line-height:20px;font-size:14px;color:#c2c2c2;letter-spacing:-0.023px;">View</div>
<div class="t" style="left:1484px;top:128.8px;height:20px;line-height:20px;font-size:14px;color:#e4d787;letter-spacing:-0.078px;">Object</div>
<div class="t" style="left:1542px;top:128.8px;height:20px;line-height:20px;font-size:14px;color:#c2c2c2;letter-spacing:-0.895px;">Tags</div>
<div class="t" style="left:1587px;top:128.8px;height:20px;line-height:20px;font-size:14px;color:#c2c2c2;letter-spacing:-0.448px;">Bookmarks</div>
<div class="b" style="left:1318px;top:153px;width:600px;height:2px;background:#232323;"></div>
<div class="b" style="left:1318px;top:156px;width:600px;height:24px;background:#242424;"></div>
<div class="t" style="left:1363.5px;top:159.3px;height:20px;line-height:20px;font-size:14px;color:#c6c6c6;letter-spacing:-0.277px;">Cylinder.4</div>
<div class="t" style="left:1363.5px;top:184.3px;height:20px;line-height:20px;font-size:14px;color:#c6c6c6;letter-spacing:-0.327px;">Cylinder.3</div>
<div class="b" style="left:1318px;top:206px;width:600px;height:24px;background:#242424;"></div>
<div class="t" style="left:1363.5px;top:209.3px;height:20px;line-height:20px;font-size:14px;color:#ffc43d;letter-spacing:-0.277px;">Cylinder.2</div>
<div class="t" style="left:1363.5px;top:234.3px;height:20px;line-height:20px;font-size:14px;color:#c6c6c6;letter-spacing:-0.377px;">Cylinder.1</div>
<div class="b" style="left:1318px;top:256px;width:600px;height:24px;background:#242424;"></div>
<div class="t" style="left:1363.5px;top:259.3px;height:20px;line-height:20px;font-size:14px;color:#c6c6c6;letter-spacing:-0.232px;">Cylinder</div>
<div class="b" style="left:1491px;top:155px;width:1px;height:338px;background:#232323;"></div>
<div class="b" style="left:1317px;top:493px;width:601px;height:3px;background:#1e1e1e;"></div>
<svg class="b" style="left:0px;top:0px;" width="1918" height="1017" viewBox="0 0 1918 1017"><path d="M1326.5 134.2H1343.5" stroke="#a6a6a6" stroke-width="2.1"/><path d="M1326.5 139.5H1343.5" stroke="#a6a6a6" stroke-width="2.1"/><path d="M1326.5 144.8H1343.5" stroke="#a6a6a6" stroke-width="2.1"/><circle cx="1827.5" cy="136.5" r="5.6" fill="none" stroke="#b4b4b4" stroke-width="1.9"/><path d="M1831.6 140.8L1837.5 147" stroke="#b4b4b4" stroke-width="2.3" stroke-linecap="round"/><path d="M1848.8 147V138.3L1856 131.8L1863.2 138.3V147H1859V141.5a3 3 0 0 0-6 0V147Z" fill="none" stroke="#b4b4b4" stroke-width="1.8" stroke-linejoin="round"/><path d="M1872 134H1890M1875.5 139.7H1886.5M1879 145.3H1883" stroke="#b4b4b4" stroke-width="2"/><path d="M1905 131.5H1899.8a1.4 1.4 0 0 0-1.4 1.4V146.5a1.4 1.4 0 0 0 1.4 1.4H1913a1.4 1.4 0 0 0 1.4-1.4V141.0" fill="none" stroke="#b4b4b4" stroke-width="1.7"/><path d="M1904.5 141.8L1915.3 131.0M1908.5 130.7H1915.6V137.8" fill="none" stroke="#b4b4b4" stroke-width="1.7"/><path d="M1329.5 155.5V180.5M1329.5 168.3H1340" stroke="#4e4e4e" stroke-width="1" fill="none"/><path d="M1343 163.70000000000002V173.10000000000002a6 2.5 0 0 0 12 0V163.70000000000002Z" fill="#7dd3f8"/><ellipse cx="1349" cy="163.70000000000002" rx="6" ry="2.5" fill="#7dd3f8" stroke="#242424" stroke-width="1"/><rect x="1438.2" y="161.5" width="11" height="11" rx="1.8" fill="#5a5a5a"/><path d="M1440.5 170.5L1447 163.9" stroke="#242424" stroke-width="1.8"/><circle cx="1461" cy="162.8" r="3.7" fill="#5d5d5d"/><circle cx="1461" cy="172.70000000000002" r="3.7" fill="#5d5d5d"/><path d="M1470.5 166.70000000000002L1475 171.3L1483.2 162.10000000000002" fill="none" stroke="#4fdc6a" stroke-width="2.2"/><path d="M1498 171.8V159.3H1511.5" fill="none" stroke="#8f8ef0" stroke-width="1.5"/><path d="M1501 162.0H1510.5C1509.5 167.3 1506 170.10000000000002 1501 170.5Z" fill="#8f8ef0"/><path d="M1329.5 180.5V205.5M1329.5 193.3H1340" stroke="#4e4e4e" stroke-width="1" fill="none"/><path d="M1343 188.70000000000002V198.10000000000002a6 2.5 0 0 0 12 0V188.70000000000002Z" fill="#7dd3f8"/><ellipse cx="1349" cy="188.70000000000002" rx="6" ry="2.5" fill="#7dd3f8" stroke="#242424" stroke-width="1"/><rect x="1438.2" y="186.5" width="11" height="11" rx="1.8" fill="#5a5a5a"/><path d="M1440.5 195.5L1447 188.9" stroke="#242424" stroke-width="1.8"/><circle cx="1461" cy="187.8" r="3.7" fill="#5d5d5d"/><circle cx="1461" cy="197.70000000000002" r="3.7" fill="#5d5d5d"/><path d="M1470.5 191.70000000000002L1475 196.3L1483.2 187.10000000000002" fill="none" stroke="#4fdc6a" stroke-width="2.2"/><path d="M1498 196.8V184.3H1511.5" fill="none" stroke="#8f8ef0" stroke-width="1.5"/><path d="M1501 187.0H1510.5C1509.5 192.3 1506 195.10000000000002 1501 195.5Z" fill="#8f8ef0"/><path d="M1329.5 205.5V230.5M1329.5 218.3H1340" stroke="#4e4e4e" stroke-width="1" fill="none"/><path d="M1343 213.70000000000002V223.10000000000002a6 2.5 0 0 0 12 0V213.70000000000002Z" fill="#7dd3f8"/><ellipse cx="1349" cy="213.70000000000002" rx="6" ry="2.5" fill="#7dd3f8" stroke="#242424" stroke-width="1"/><rect x="1438.2" y="211.5" width="11" height="11" rx="1.8" fill="#5a5a5a"/><path d="M1440.5 220.5L1447 213.9" stroke="#242424" stroke-width="1.8"/><circle cx="1461" cy="212.8" r="3.7" fill="#5d5d5d"/><circle cx="1461" cy="222.70000000000002" r="3.7" fill="#5d5d5d"/><path d="M1470.5 216.70000000000002L1475 221.3L1483.2 212.10000000000002" fill="none" stroke="#4fdc6a" stroke-width="2.2"/><path d="M1498 221.8V209.3H1511.5" fill="none" stroke="#8f8ef0" stroke-width="1.5"/><path d="M1501 212.0H1510.5C1509.5 217.3 1506 220.10000000000002 1501 220.5Z" fill="#8f8ef0"/><path d="M1329.5 230.5V255.5M1329.5 243.3H1340" stroke="#4e4e4e" stroke-width="1" fill="none"/><path d="M1343 238.70000000000002V248.10000000000002a6 2.5 0 0 0 12 0V238.70000000000002Z" fill="#7dd3f8"/><ellipse cx="1349" cy="238.70000000000002" rx="6" ry="2.5" fill="#7dd3f8" stroke="#242424" stroke-width="1"/><rect x="1438.2" y="236.5" width="11" height="11" rx="1.8" fill="#5a5a5a"/><path d="M1440.5 245.5L1447 238.9" stroke="#242424" stroke-width="1.8"/><circle cx="1461" cy="237.8" r="3.7" fill="#5d5d5d"/><circle cx="1461" cy="247.70000000000002" r="3.7" fill="#5d5d5d"/><path d="M1470.5 241.70000000000002L1475 246.3L1483.2 237.10000000000002" fill="none" stroke="#4fdc6a" stroke-width="2.2"/><path d="M1498 246.8V234.3H1511.5" fill="none" stroke="#8f8ef0" stroke-width="1.5"/><path d="M1501 237.0H1510.5C1509.5 242.3 1506 245.10000000000002 1501 245.5Z" fill="#8f8ef0"/><path d="M1329.5 255.5V268.3H1340" stroke="#4e4e4e" stroke-width="1" fill="none"/><path d="M1343 263.7V273.1a6 2.5 0 0 0 12 0V263.7Z" fill="#7dd3f8"/><ellipse cx="1349" cy="263.7" rx="6" ry="2.5" fill="#7dd3f8" stroke="#242424" stroke-width="1"/><rect x="1438.2" y="261.5" width="11" height="11" rx="1.8" fill="#5a5a5a"/><path d="M1440.5 270.5L1447 263.90000000000003" stroke="#242424" stroke-width="1.8"/><circle cx="1461" cy="262.8" r="3.7" fill="#5d5d5d"/><circle cx="1461" cy="272.7" r="3.7" fill="#5d5d5d"/><path d="M1470.5 266.7L1475 271.3L1483.2 262.1" fill="none" stroke="#4fdc6a" stroke-width="2.2"/><path d="M1498 271.8V259.3H1511.5" fill="none" stroke="#8f8ef0" stroke-width="1.5"/><path d="M1501 262.0H1510.5C1509.5 267.3 1506 270.1 1501 270.5Z" fill="#8f8ef0"/></svg>
<div class="b" style="left:1318px;top:496px;width:600px;height:28px;background:#1c1c1c;"></div>
<div class="b" style="left:1318px;top:496px;width:89px;height:28px;background:#2b2b2b;border-radius:4px 4px 0 0;"></div>
<div class="b" style="left:1318px;top:524px;width:600px;height:466px;background:#2b2b2b;"></div>
<div class="t" style="left:1332.5px;top:499.8px;height:20px;line-height:20px;font-size:14px;color:#ececec;letter-spacing:0.086px;">Attributes</div>
<div class="t" style="left:1422.5px;top:499.8px;height:20px;line-height:20px;font-size:14px;color:#a8a8a8;letter-spacing:-0.672px;">Layers</div>
<div class="t" style="left:1356.5px;top:527.8px;height:20px;line-height:20px;font-size:14px;color:#c2c2c2;letter-spacing:0.117px;">Mode</div>
<div class="t" style="left:1410.5px;top:527.8px;height:20px;line-height:20px;font-size:14px;color:#c2c2c2;letter-spacing:-0.406px;">Edit</div>
<div class="t" style="left:1451.5px;top:527.8px;height:20px;line-height:20px;font-size:14px;color:#c2c2c2;letter-spacing:-0.448px;">User Data</div>
<div class="t" style="left:1359px;top:559.8px;height:20px;line-height:20px;font-size:14px;color:#c0c0c0;letter-spacing:-0.148px;">Cylinder Object [Cylinder.2]</div>
<div class="b" style="left:1785px;top:558px;width:126px;height:24px;background:#3a3a3a;border-radius:12px 9px 9px 12px;"></div>
<div class="b" style="left:1884.5px;top:559px;width:1.0px;height:22px;background:#2b2b2b;"></div>
<div class="t" style="left:1794.5px;top:560.0px;height:20px;line-height:20px;font-size:14px;color:#d8d8d8;letter-spacing:-0.372px;">Custom</div>
<div class="b" style="left:1329px;top:589px;width:53px;height:23.5px;background:#3a3a3a;border-radius:5px;"></div>
<div class="t" style="left:1340.5px;top:591.3px;height:20px;line-height:20px;font-size:14px;color:#d0d0d0;letter-spacing:-0.847px;">Basic</div>
<div class="b" style="left:1388px;top:589px;width:95px;height:23.5px;background:#3a3a3a;border-radius:5px;"></div>
<div class="t" style="left:1399px;top:591.3px;height:20px;line-height:20px;font-size:14px;color:#d0d0d0;letter-spacing:-0.227px;">Coordinates</div>
<div class="b" style="left:1489px;top:589px;width:62px;height:23.5px;background:#5459a8;border-radius:5px;"></div>
<div class="t" style="left:1500px;top:591.3px;height:20px;line-height:20px;font-size:14px;color:#f2f2f2;letter-spacing:-0.078px;">Object</div>
<div class="b" style="left:1557px;top:589px;width:51px;height:23.5px;background:#3a3a3a;border-radius:5px;"></div>
<div class="t" style="left:1567.5px;top:591.3px;height:20px;line-height:20px;font-size:14px;color:#d0d0d0;letter-spacing:-0.797px;">Caps</div>
<div class="b" style="left:1614px;top:589px;width:50px;height:23.5px;background:#3a3a3a;border-radius:5px;"></div>
<div class="t" style="left:1625px;top:591.3px;height:20px;line-height:20px;font-size:14px;color:#d0d0d0;letter-spacing:-0.572px;">Slice</div>
<div class="b" style="left:1670px;top:589px;width:76px;height:23.5px;background:#3a3a3a;border-radius:5px;"></div>
<div class="t" style="left:1696px;top:591.3px;height:20px;line-height:20px;font-size:14px;color:#d0d0d0;letter-spacing:-0.397px;">Phong</div>
<div class="t" style="left:1329px;top:622.5px;height:20px;line-height:20px;font-size:15px;color:#f0f0f0;letter-spacing:-0.052px;">Object Properties</div>
<div class="t" style="left:1357px;top:651.0px;height:20px;line-height:20px;font-size:14px;color:#c2c2c2;letter-spacing:-0.766px;">Radius</div>
<div class="b" style="left:1479px;top:650px;width:93px;height:22px;background:#1b1b1b;border-radius:5px;"></div>
<div class="t" style="left:1506.5px;top:651.3px;height:20px;line-height:20px;font-size:14px;color:#e2e2e2;letter-spacing:-0.325px;">40 cm</div>
<div class="b" style="left:1577px;top:658.1px;width:331px;height:3.6000000000000227px;background:#1d1d1d;border-radius:2px;"></div>
<div class="b" style="left:1577px;top:658px;width:13px;height:3.7999999999999545px;background:#5b60b4;border-radius:2px;"></div>
<div class="b" style="left:1587.5px;top:653.4px;width:5.0px;height:14.0px;background:#bdbdbd;border-radius:2.5px;"></div>
<div class="t" style="left:1357px;top:679.0px;height:20px;line-height:20px;font-size:14px;color:#c2c2c2;letter-spacing:-0.078px;">Height</div>
<div class="b" style="left:1479px;top:678px;width:93px;height:22px;background:#1b1b1b;border-radius:5px;"></div>
<div class="t" style="left:1507.5px;top:679.3px;height:20px;line-height:20px;font-size:14px;color:#e2e2e2;letter-spacing:-0.525px;">10 cm</div>
<div class="b" style="left:1577px;top:686.1px;width:331px;height:3.6000000000000227px;background:#1d1d1d;border-radius:2px;"></div>
<div class="b" style="left:1577.5px;top:681.4px;width:5.0px;height:14.0px;background:#bdbdbd;border-radius:2.5px;"></div>
<div class="t" style="left:1357px;top:706.5px;height:20px;line-height:20px;font-size:14px;color:#c2c2c2;letter-spacing:-0.227px;">Height Segments</div>
<div class="b" style="left:1479px;top:705.5px;width:93px;height:22.0px;background:#1b1b1b;border-radius:5px;"></div>
<div class="t" style="left:1521.5px;top:706.8px;height:20px;line-height:20px;font-size:14px;color:#e2e2e2;letter-spacing:-0.297px;">4</div>
<div class="b" style="left:1577px;top:713.6px;width:331px;height:3.6000000000000227px;background:#1d1d1d;border-radius:2px;"></div>
<div class="b" style="left:1577px;top:713.5px;width:9px;height:3.7999999999999545px;background:#5b60b4;border-radius:2px;"></div>
<div class="b" style="left:1583.5px;top:708.9px;width:5.0px;height:14.0px;background:#bdbdbd;border-radius:2.5px;"></div>
<div class="t" style="left:1357px;top:734.0px;height:20px;line-height:20px;font-size:14px;color:#c2c2c2;letter-spacing:-0.269px;">Rotation Segments</div>
<div class="b" style="left:1479px;top:733px;width:93px;height:22px;background:#1b1b1b;border-radius:5px;"></div>
<div class="t" style="left:1517.5px;top:734.3px;height:20px;line-height:20px;font-size:14px;color:#e2e2e2;letter-spacing:-0.289px;">40</div>
<div class="b" style="left:1577px;top:741.1px;width:331px;height:3.6000000000000227px;background:#1d1d1d;border-radius:2px;"></div>
<div class="b" style="left:1577px;top:741px;width:125.5px;height:3.7999999999999545px;background:#5b60b4;border-radius:2px;"></div>
<div class="b" style="left:1700.0px;top:736.4px;width:5.0px;height:14.0px;background:#bdbdbd;border-radius:2.5px;"></div>
<div class="t" style="left:1357px;top:761.5px;height:20px;line-height:20px;font-size:14px;color:#c2c2c2;letter-spacing:0.001px;">Orientation</div>
<div class="b" style="left:1479px;top:760px;width:71px;height:22px;background:#3f3f3f;"></div>
<div class="t" style="left:1506.0px;top:761.3px;height:20px;line-height:20px;font-size:14px;color:#d0d0d0;letter-spacing:-0.258px;">+X</div>
<div class="b" style="left:1550px;top:760px;width:71px;height:22px;background:#3f3f3f;"></div>
<div class="b" style="left:1550px;top:760px;width:1px;height:22px;background:#383838;"></div>
<div class="t" style="left:1578.9px;top:761.3px;height:20px;line-height:20px;font-size:14px;color:#d0d0d0;letter-spacing:-0.250px;">-X</div>
<div class="b" style="left:1621px;top:760px;width:71px;height:22px;background:#5c5c5c;"></div>
<div class="t" style="left:1648.3px;top:761.3px;height:20px;line-height:20px;font-size:14px;color:#ededed;letter-spacing:-0.258px;">+Y</div>
<div class="b" style="left:1692px;top:760px;width:72px;height:22px;background:#3f3f3f;"></div>
<div class="t" style="left:1721.2px;top:761.3px;height:20px;line-height:20px;font-size:14px;color:#d0d0d0;letter-spacing:-0.250px;">-Y</div>
<div class="b" style="left:1764px;top:760px;width:71px;height:22px;background:#3f3f3f;"></div>
<div class="b" style="left:1764px;top:760px;width:1px;height:22px;background:#383838;"></div>
<div class="t" style="left:1790.85px;top:761.3px;height:20px;line-height:20px;font-size:14px;color:#d0d0d0;letter-spacing:-0.117px;">+Z</div>
<div class="b" style="left:1835px;top:760px;width:71px;height:22px;background:#3f3f3f;"></div>
<div class="b" style="left:1835px;top:760px;width:1px;height:22px;background:#383838;"></div>
<div class="t" style="left:1863.75px;top:761.3px;height:20px;line-height:20px;font-size:14px;color:#d0d0d0;letter-spacing:-0.109px;">-Z</div>
<div class="b" style="left:1479px;top:782px;width:426px;height:1px;background:#242424;"></div>
<svg class="b" style="left:0px;top:0px;" width="1918" height="1017" viewBox="0 0 1918 1017"><path d="M1326.5 533H1343.5" stroke="#a6a6a6" stroke-width="2.1"/><path d="M1326.5 538.3H1343.5" stroke="#a6a6a6" stroke-width="2.1"/><path d="M1326.5 543.6H1343.5" stroke="#a6a6a6" stroke-width="2.1"/><path d="M1738 538.5H1723M1728.5 532.5L1722.5 538.5L1728.5 544.5" fill="none" stroke="#b4b4b4" stroke-width="2.2"/><path d="M1748 538.5H1763M1757.5 532.5L1763.5 538.5L1757.5 544.5" fill="none" stroke="#4a4a4a" stroke-width="2.2"/><path d="M1780.8 546.5V531.5M1774.8 537L1780.8 531L1786.8 537" fill="none" stroke="#b4b4b4" stroke-width="2.2"/><circle cx="1804" cy="536" r="5.4" fill="none" stroke="#b4b4b4" stroke-width="1.9"/><path d="M1808 540.2L1813.5 546" stroke="#b4b4b4" stroke-width="2.3" stroke-linecap="round"/><path d="M1822 533H1840M1825.5 538.7H1836.5M1829 544.3H1833" stroke="#b4b4b4" stroke-width="2.2"/><rect x="1849.5" y="537" width="12.6" height="9.5" rx="1.2" fill="none" stroke="#b4b4b4" stroke-width="2"/><path d="M1852.3 537V534a3.5 3.5 0 0 1 7 0V537" fill="none" stroke="#b4b4b4" stroke-width="1.9"/><circle cx="1855.8" cy="541.8" r="1.4" fill="#b4b4b4"/><circle cx="1881" cy="538.5" r="9" fill="none" stroke="#b4b4b4" stroke-width="1.9"/><circle cx="1881" cy="538.5" r="3.3" fill="none" stroke="#b4b4b4" stroke-width="1.9"/><path d="M1905 530.5H1899.8a1.4 1.4 0 0 0-1.4 1.4V545.5a1.4 1.4 0 0 0 1.4 1.4H1913a1.4 1.4 0 0 0 1.4-1.4V540.0" fill="none" stroke="#b4b4b4" stroke-width="1.7"/><path d="M1904.5 540.8L1915.3 530.0M1908.5 529.7H1915.6V536.8" fill="none" stroke="#b4b4b4" stroke-width="1.7"/><path d="M1331.6 563.3V577.2a8.5 3.6 0 0 0 17 0V563.3Z" fill="#7dd3f8"/><ellipse cx="1340.1" cy="563.3" rx="8.5" ry="3.6" fill="#7dd3f8" stroke="#2b2b2b" stroke-width="1.1"/><path d="M1893 567.3H1902L1897.5 572.8Z" fill="#d0d0d0"/><path d="M1683 605.5V600.5a4 4 0 0 1 8 0V605.5Z" fill="none" stroke="#d0d0d0" stroke-width="1.4"/><circle cx="1337.5" cy="661" r="8.5" fill="#262626"/><path d="M1337.5 655.7L1342.8 661L1337.5 666.3L1332.2 661Z" fill="none" stroke="#b0b0b0" stroke-width="1.5"/><circle cx="1337.5" cy="689" r="8.5" fill="#262626"/><path d="M1337.5 683.7L1342.8 689L1337.5 694.3L1332.2 689Z" fill="none" stroke="#b0b0b0" stroke-width="1.5"/><circle cx="1337.5" cy="716.5" r="8.5" fill="#262626"/><path d="M1337.5 711.2L1342.8 716.5L1337.5 721.8L1332.2 716.5Z" fill="none" stroke="#b0b0b0" stroke-width="1.5"/><circle cx="1337.5" cy="744" r="8.5" fill="#262626"/><path d="M1337.5 738.7L1342.8 744L1337.5 749.3L1332.2 744Z" fill="none" stroke="#b0b0b0" stroke-width="1.5"/><circle cx="1337.5" cy="771.5" r="8.5" fill="#262626"/><path d="M1337.5 766.2L1342.8 771.5L1337.5 776.8L1332.2 771.5Z" fill="none" stroke="#b0b0b0" stroke-width="1.5"/></svg>
<div class="b" style="left:47px;top:884px;width:1221px;height:106px;background:#2b2b2b;"></div>
<div class="b" style="left:56px;top:895px;width:35px;height:35px;background:#3d3d3d;border-radius:5px;"></div>
<div class="b" style="left:226px;top:895px;width:245px;height:35px;background:#3d3d3d;border-radius:5px;"></div>
<div class="b" style="left:261px;top:896px;width:1px;height:33px;background:#323232;"></div>
<div class="b" style="left:296px;top:896px;width:1px;height:33px;background:#323232;"></div>
<div class="b" style="left:331px;top:896px;width:1px;height:33px;background:#323232;"></div>
<div class="b" style="left:366px;top:896px;width:1px;height:33px;background:#323232;"></div>
<div class="b" style="left:401px;top:896px;width:1px;height:33px;background:#323232;"></div>
<div class="b" style="left:436px;top:896px;width:1px;height:33px;background:#323232;"></div>
<div class="b" style="left:485px;top:895px;width:103px;height:35px;background:#3d3d3d;border-radius:5px;"></div>
<div class="b" style="left:485px;top:895px;width:68px;height:35px;background:#54589f;border-radius:5px 0 0 5px;"></div>
<div class="b" style="left:709px;top:895px;width:104px;height:35px;background:#3d3d3d;border-radius:5px;"></div>
<div class="b" style="left:826px;top:895px;width:175px;height:35px;background:#3d3d3d;border-radius:5px;"></div>
<div class="b" style="left:861px;top:896px;width:1px;height:33px;background:#323232;"></div>
<div class="b" style="left:896px;top:896px;width:1px;height:33px;background:#323232;"></div>
<div class="b" style="left:931px;top:896px;width:1px;height:33px;background:#323232;"></div>
<div class="b" style="left:966px;top:896px;width:1px;height:33px;background:#323232;"></div>
<div class="b" style="left:966px;top:895px;width:35px;height:35px;background:#54589f;border-radius:0 5px 5px 0;"></div>
<div class="b" style="left:1026px;top:895px;width:70px;height:35px;background:#3d3d3d;border-radius:5px;"></div>
<div class="b" style="left:1061px;top:896px;width:1px;height:33px;background:#323232;"></div>
<div class="b" style="left:1230px;top:895px;width:35px;height:35px;background:#3d3d3d;border-radius:5px;"></div>
<div class="b" style="left:603px;top:901.5px;width:92.5px;height:23.0px;background:#1b1b1b;border-radius:5px;"></div>
<div class="t" style="left:626.5px;top:903.0px;height:20px;line-height:20px;font-size:14px;color:#dedede;letter-spacing:-0.641px;">87.50 F</div>
<div class="t" style="left:56px;top:932px;width:6px;height:20px;overflow:hidden;line-height:20px;font-size:14px;color:#c4c4c4"><span style="margin-left:-3.5px">0</span></div>
<div class="t" style="left:119.90156250000001px;top:931.2px;height:20px;line-height:20px;font-size:14px;color:#c4c4c4;letter-spacing:-0.300px;">5</div>
<div class="t" style="left:184.41093750000002px;top:931.2px;height:20px;line-height:20px;font-size:14px;color:#c4c4c4;letter-spacing:-0.150px;">10</div>
<div class="t" style="left:252.8109375px;top:931.2px;height:20px;line-height:20px;font-size:14px;color:#c4c4c4;letter-spacing:-0.150px;">15</div>
<div class="t" style="left:321.2109375px;top:931.2px;height:20px;line-height:20px;font-size:14px;color:#c4c4c4;letter-spacing:-0.150px;">20</div>
<div class="t" style="left:389.6109375px;top:931.2px;height:20px;line-height:20px;font-size:14px;color:#c4c4c4;letter-spacing:-0.150px;">25</div>
<div class="t" style="left:458.01093749999995px;top:931.2px;height:20px;line-height:20px;font-size:14px;color:#c4c4c4;letter-spacing:-0.150px;">30</div>
<div class="t" style="left:526.4109374999999px;top:931.2px;height:20px;line-height:20px;font-size:14px;color:#c4c4c4;letter-spacing:-0.150px;">35</div>
<div class="t" style="left:594.8109375px;top:931.2px;height:20px;line-height:20px;font-size:14px;color:#c4c4c4;letter-spacing:-0.150px;">40</div>
<div class="t" style="left:663.2109375px;top:931.2px;height:20px;line-height:20px;font-size:14px;color:#c4c4c4;letter-spacing:-0.150px;">45</div>
<div class="t" style="left:731.6109375px;top:931.2px;height:20px;line-height:20px;font-size:14px;color:#c4c4c4;letter-spacing:-0.150px;">50</div>
<div class="t" style="left:800.0109375px;top:931.2px;height:20px;line-height:20px;font-size:14px;color:#c4c4c4;letter-spacing:-0.150px;">55</div>
<div class="t" style="left:868.4109374999999px;top:931.2px;height:20px;line-height:20px;font-size:14px;color:#c4c4c4;letter-spacing:-0.150px;">60</div>
<div class="t" style="left:936.8109374999999px;top:931.2px;height:20px;line-height:20px;font-size:14px;color:#c4c4c4;letter-spacing:-0.150px;">65</div>
<div class="t" style="left:1005.2109375px;top:931.2px;height:20px;line-height:20px;font-size:14px;color:#c4c4c4;letter-spacing:-0.150px;">70</div>
<div class="t" style="left:1073.6109375px;top:931.2px;height:20px;line-height:20px;font-size:14px;color:#c4c4c4;letter-spacing:-0.150px;">75</div>
<div class="t" style="left:1142.0109375000002px;top:931.2px;height:20px;line-height:20px;font-size:14px;color:#c4c4c4;letter-spacing:-0.150px;">80</div>
<div class="t" style="left:1210.4109375px;top:931.2px;height:20px;line-height:20px;font-size:14px;color:#c4c4c4;letter-spacing:-0.150px;">85</div>
<div class="b" style="left:1240px;top:933px;width:11px;height:20px;background:#6a6fc8;"></div>
<div class="t" style="left:1253px;top:931.8px;height:20px;line-height:20px;font-size:14px;color:#6f74d4;letter-spacing:-0.539px;">87</div>
<div class="b" style="left:57px;top:964px;width:93px;height:22px;background:#1b1b1b;border-radius:5px;"></div>
<div class="t" style="left:85px;top:965.3px;height:20px;line-height:20px;font-size:14px;color:#dedede;letter-spacing:-0.617px;">1.25 F</div>
<div class="b" style="left:160px;top:963.5px;width:1007.5px;height:21.5px;background:#3d3d3d;border-radius:4px;"></div>
<div class="t" style="left:180px;top:964.3px;height:20px;line-height:20px;font-size:14px;color:#dedede;letter-spacing:-0.784px;">1.25 F</div>
<div class="t" style="left:1102.5px;top:964.3px;height:20px;line-height:20px;font-size:14px;color:#dedede;letter-spacing:-0.641px;">87.50 F</div>
<div class="b" style="left:1177px;top:964px;width:92px;height:22.5px;background:#1b1b1b;border-radius:5px;"></div>
<div class="t" style="left:1200.5px;top:965.3px;height:20px;line-height:20px;font-size:14px;color:#dedede;letter-spacing:-0.641px;">87.50 F</div>
<div class="b" style="left:0px;top:990px;width:1918px;height:27px;background:#1c1c1c;"></div>
<svg class="b" style="left:0px;top:0px;" width="1918" height="1017" viewBox="0 0 1918 1017"><defs><pattern id="dp5" width="3.8" height="4.0" patternUnits="userSpaceOnUse" patternTransform="translate(52.2 886.6)"><rect width="1.7" height="1.9" fill="#4a4a4a"/></pattern></defs><rect x="52.2" y="886.6" width="1213.90" height="5.70" fill="url(#dp5)"/><defs><pattern id="dp6" width="4.0" height="3.92" patternUnits="userSpaceOnUse" patternTransform="translate(47.3 899)"><rect width="1.7" height="1.9" fill="#4a4a4a"/></pattern></defs><rect x="47.3" y="899" width="5.70" height="25.22" fill="url(#dp6)"/><defs><pattern id="dp7" width="4.0" height="3.92" patternUnits="userSpaceOnUse" patternTransform="translate(47.3 936)"><rect width="1.7" height="1.9" fill="#4a4a4a"/></pattern></defs><rect x="47.3" y="936" width="5.70" height="48.74" fill="url(#dp7)"/><path d="M73.5 903.2L82.6 912.3L73.5 921.4L64.4 912.3Z" fill="none" stroke="#d0d0d0" stroke-width="2.7"/><path d="M236 904.0V921.0" stroke="#c6c6c6" stroke-width="1.8"/><path d="M250.5 905.0V920.0L241.0 912.5Z" fill="none" stroke="#c6c6c6" stroke-width="1.6" stroke-linejoin="miter"/><path d="M272.5 907.1L277.9 912.5L272.5 917.9L267.1 912.5Z" fill="#c6c6c6"/><path d="M290.5 905.0V920.0L281.0 912.5Z" fill="none" stroke="#c6c6c6" stroke-width="1.6" stroke-linejoin="miter"/><path d="M316 905.0V920.0L306.5 912.5Z" fill="none" stroke="#c6c6c6" stroke-width="1.6" stroke-linejoin="miter"/><path d="M320.3 904.0V921.0" stroke="#c6c6c6" stroke-width="1.8"/><path d="M341.5 903.0V922.0L355.5 912.5Z" fill="none" stroke="#c6c6c6" stroke-width="1.7"/><path d="M376.3 904.0V921.0" stroke="#c6c6c6" stroke-width="1.8"/><path d="M380.5 905.0V920.0L390.0 912.5Z" fill="none" stroke="#c6c6c6" stroke-width="1.6" stroke-linejoin="miter"/><path d="M407.5 905.0V920.0L417.0 912.5Z" fill="none" stroke="#c6c6c6" stroke-width="1.6" stroke-linejoin="miter"/><path d="M425.5 907.1L430.9 912.5L425.5 917.9L420.1 912.5Z" fill="#c6c6c6"/><path d="M446 905.0V920.0L455.5 912.5Z" fill="none" stroke="#c6c6c6" stroke-width="1.6" stroke-linejoin="miter"/><path d="M460.5 904.0V921.0" stroke="#c6c6c6" stroke-width="1.8"/><path d="M493.5 912V907H509.5M505.5 902.5L510.5 907L505.5 911.5" fill="none" stroke="#d6d6e2" stroke-width="1.9"/><path d="M510.5 913V918H494.5M498.5 913.5L493.5 918L498.5 922.5" fill="none" stroke="#d6d6e2" stroke-width="1.9"/><path d="M517 929L517 923L511 929Z" fill="#9fa2cc"/><text x="536.5" y="912" font-size="11.5" text-anchor="middle" fill="#d6d6e2" font-family='"Liberation Sans",sans-serif'>A</text><path d="M525 918.8H527.2M529.3 918.8H531.5M533.6 918.8H535.8M538 918.8H540.2" stroke="#d6d6e2" stroke-width="5"/><rect x="541.5" y="916.3" width="6.6" height="5" fill="#d6d6e2"/><path d="M552 929L552 923L546 929Z" fill="#9fa2cc"/><path d="M561.5 909H565.5L571.5 903.5V921.5L565.5 916H561.5Z" fill="none" stroke="#c6c6c6" stroke-width="1.6" stroke-linejoin="round"/><path d="M575 908.5a5 5 0 0 1 0 8M577.5 904.5a10 10 0 0 1 0 16" fill="none" stroke="#c6c6c6" stroke-width="1.7"/><circle cx="726.5" cy="912.5" r="10.6" fill="none" stroke="#e86e5c" stroke-width="1.6"/><path d="M726.5 907.2L731.8 912.5L726.5 917.8L721.2 912.5Z" fill="#d9d9d9"/><path d="M742.5 929.5L742.5 923.5L736.5 929.5Z" fill="#aaa"/><circle cx="761.5" cy="912.5" r="10.6" fill="none" stroke="#e86e5c" stroke-width="1.6"/><path d="M756.8 918L761.5 906.5L766.2 918M758.3 914.3H764.7" fill="none" stroke="#d9d9d9" stroke-width="1.6"/><circle cx="796.5" cy="912.5" r="10.6" fill="none" stroke="#c6c6c6" stroke-width="1.6"/><path d="M795.26 905.61 L797.74 905.61 L797.84 907.89 L799.82 909.04 L801.85 907.98 L803.09 910.13 L801.16 911.36 L801.16 913.64 L803.09 914.87 L801.85 917.02 L799.82 915.96 L797.84 917.11 L797.74 919.39 L795.26 919.39 L795.16 917.11 L793.18 915.96 L791.15 917.02 L789.91 914.87 L791.84 913.64 L791.84 911.36 L789.91 910.13 L791.15 907.98 L793.18 909.04 L795.16 907.89Z M793.80 912.50 a2.7 2.7 0 1 0 5.4 0 a2.7 2.7 0 1 0 -5.4 0Z" fill="#c6c6c6" fill-rule="evenodd" stroke="#c6c6c6" stroke-width="1.3" stroke-linejoin="round"/><path d="M843.5 906.9L849.1 912.5L843.5 918.1L837.9 912.5Z" fill="#c6c6c6"/><path d="M839.3 905.1L843.5 901.1L847.7 905.1M839.3 919.9L843.5 923.9L847.7 919.9M836.1 908.3L832.1 912.5L836.1 916.7M850.9 908.3L854.9 912.5L850.9 916.7" fill="none" stroke="#c6c6c6" stroke-width="1.7"/><path d="M878.5 906.7L884.3 912.5L878.5 918.3L872.7 912.5Z" fill="#c6c6c6"/><path d="M877.0 901.3A11.3 11.3 0 0 0 872.9 922.3" fill="none" stroke="#c6c6c6" stroke-width="1.8"/><path d="M867.2 922.8H873.6V916.7" fill="none" stroke="#c6c6c6" stroke-width="1.8"/><path d="M880.0 923.7A11.3 11.3 0 0 0 884.1 902.7" fill="none" stroke="#c6c6c6" stroke-width="1.8"/><path d="M889.8 902.2H883.4V908.3" fill="none" stroke="#c6c6c6" stroke-width="1.8"/><path d="M908.9 911.5L914.6999999999999 917.3L908.9 923.0999999999999L903.1 917.3Z" fill="#c6c6c6"/><path d="M903.9 910.0V902.7H923.3V922.3H916.5" fill="none" stroke="#c6c6c6" stroke-width="1.9"/><rect x="937.9" y="903.3" width="21.2" height="7.6" rx="3.8" fill="#c6c6c6"/><rect x="937.9" y="914.1" width="21.2" height="7.6" rx="3.8" fill="#c6c6c6"/><circle cx="942.1" cy="907.1" r="1.9" fill="#3d3d3d"/><circle cx="954.9" cy="917.9" r="1.9" fill="#3d3d3d"/><circle cx="978.0" cy="918.0" r="3.8" fill="#d6d6e2"/><circle cx="985.0" cy="906.7" r="3.6" fill="#d6d6e2"/><circle cx="991.3" cy="919.5" r="2.8" fill="#a9abd4"/><path d="M973.5 902.0L994.0 922.5" stroke="#e2e2ea" stroke-width="1.9"/><circle cx="1043.5" cy="912.5" r="10.8" fill="none" stroke="#c6c6c6" stroke-width="1.7"/><rect x="1038.9" y="905.7" width="9.2" height="13.6" rx="4.4" fill="none" stroke="#c6c6c6" stroke-width="1.5"/><path d="M1038.9 911.7H1048.1M1043.5 905.7V911.7" stroke="#c6c6c6" stroke-width="1.3"/><path d="M1039.3 911.3V909.5a4.2 4.2 0 0 1 4.2-3.6V911.3Z" fill="#c6c6c6"/><path d="M1074.0 902.7A10.8 10.8 0 1 0 1088.3 917.0" fill="none" stroke="#c6c6c6" stroke-width="1.7"/><path d="M1080.0 901.8A10.8 10.8 0 0 1 1089.2 911.0" fill="none" stroke="#c6c6c6" stroke-width="1.7" stroke-dasharray="5 3"/><path d="M1078.0 907.2L1083.8 913.0L1078.0 918.8L1072.2 913.0Z" fill="#c6c6c6"/><path d="M1081.0 910.0L1086.5 904.5" stroke="#c6c6c6" stroke-width="1.8"/><path d="M1237.8 903V922.3H1257.5" fill="none" stroke="#c6c6c6" stroke-width="1.9"/><path d="M1234 906.5L1237.8 902L1241.6 906.5M1253.5 918.5L1258 922.3L1253.5 926.1" fill="none" stroke="#c6c6c6" stroke-width="1.7"/><path d="M1241 919L1256 904M1250.2 903.4H1256.6V909.8" fill="none" stroke="#c6c6c6" stroke-width="1.8"/><path d="M56 953.5H1267" stroke="#3a3a3a" stroke-width="1"/><path d="M69.7 956.4V959.3M83.4 956.4V959.3M97.0 956.4V959.3M110.7 956.4V959.3M124.4 956.4V961.2M138.1 956.4V959.3M151.8 956.4V959.3M165.4 956.4V959.3M179.1 956.4V959.3M192.8 956.4V961.2M206.5 956.4V959.3M220.2 956.4V959.3M233.8 956.4V959.3M247.5 956.4V959.3M261.2 956.4V961.2M274.9 956.4V959.3M288.6 956.4V959.3M302.2 956.4V959.3M315.9 956.4V959.3M329.6 956.4V961.2M343.3 956.4V959.3M357.0 956.4V959.3M370.6 956.4V959.3M384.3 956.4V959.3M398.0 956.4V961.2M411.7 956.4V959.3M425.4 956.4V959.3M439.0 956.4V959.3M452.7 956.4V959.3M466.4 956.4V961.2M480.1 956.4V959.3M493.8 956.4V959.3M507.4 956.4V959.3M521.1 956.4V959.3M534.8 956.4V961.2M548.5 956.4V959.3M562.2 956.4V959.3M575.8 956.4V959.3M589.5 956.4V959.3M603.2 956.4V961.2M616.9 956.4V959.3M630.6 956.4V959.3M644.2 956.4V959.3M657.9 956.4V959.3M671.6 956.4V961.2M685.3 956.4V959.3M699.0 956.4V959.3M712.6 956.4V959.3M726.3 956.4V959.3M740.0 956.4V961.2M753.7 956.4V959.3M767.4 956.4V959.3M781.0 956.4V959.3M794.7 956.4V959.3M808.4 956.4V961.2M822.1 956.4V959.3M835.8 956.4V959.3M849.4 956.4V959.3M863.1 956.4V959.3M876.8 956.4V961.2M890.5 956.4V959.3M904.2 956.4V959.3M917.8 956.4V959.3M931.5 956.4V959.3M945.2 956.4V961.2M958.9 956.4V959.3M972.6 956.4V959.3M986.2 956.4V959.3M999.9 956.4V959.3M1013.6 956.4V961.2M1027.3 956.4V959.3M1041.0 956.4V959.3M1054.6 956.4V959.3M1068.3 956.4V959.3M1082.0 956.4V961.2M1095.7 956.4V959.3M1109.4 956.4V959.3M1123.0 956.4V959.3M1136.7 956.4V959.3M1150.4 956.4V961.2M1164.1 956.4V959.3M1177.8 956.4V959.3M1191.4 956.4V959.3M1205.1 956.4V959.3M1218.8 956.4V961.2M1232.5 956.4V959.3M1246.2 956.4V959.3M1259.8 956.4V959.3" stroke="#b4b4b4" stroke-width="1.1"/><path d="M466.4 934.5V960" stroke="#cfcfcf" stroke-width="1"/><path d="M876.8 934.5V960" stroke="#cfcfcf" stroke-width="1"/><path d="M1245.5 953V959.5" stroke="#6a6fc8" stroke-width="1.4"/><path d="M167 968V980.5M169.3 968V980.5M171.6 968V980.5" stroke="#555" stroke-width="1"/><path d="M1157 968V980.5M1159.3 968V980.5M1161.6 968V980.5" stroke="#555" stroke-width="1"/><path d="M6 999.3H23.5M6 1005H23.5M6 1010.7H23.5" stroke="#bdbdbd" stroke-width="2"/><circle cx="44.7" cy="1006" r="8.6" fill="none" stroke="#bdbdbd" stroke-width="1.5"/><path d="M40 1005.5L44 1010L53.5 998.5" fill="none" stroke="#bdbdbd" stroke-width="1.9"/></svg>
</body></html>
